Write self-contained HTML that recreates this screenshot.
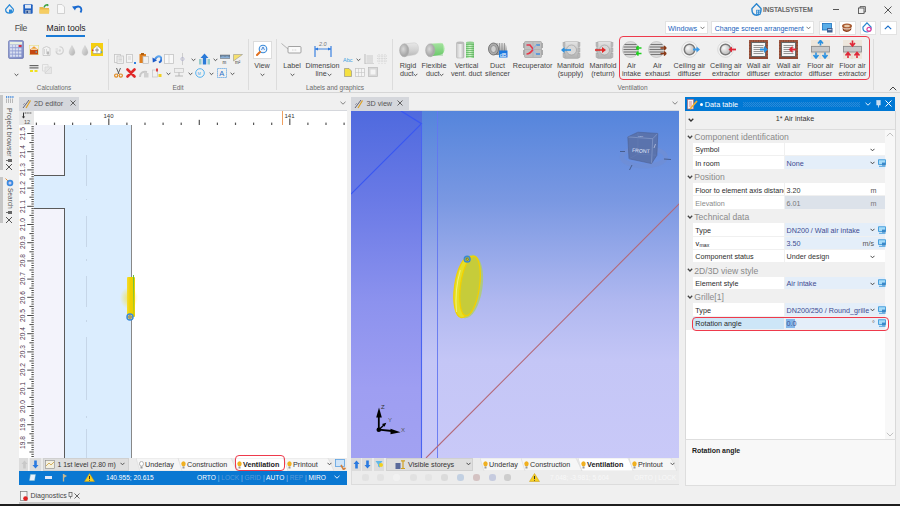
<!DOCTYPE html>
<html><head><meta charset="utf-8">
<style>
*{box-sizing:border-box;margin:0;padding:0}
html,body{width:900px;height:506px;overflow:hidden;background:#f0f0f0;font-family:"Liberation Sans",sans-serif;color:#333;position:relative}
.a{position:absolute;display:block}
.t{position:absolute;white-space:nowrap;line-height:1}
</style></head><body>
<svg class="a" style="left:5px;top:4px;" width="9" height="10" viewBox="0 0 9 10"><path d="M4.5 0.8 L8.3 5.2 Q8.6 8.8 4.5 9.2 Q0.4 8.8 0.7 5.2 Z" fill="none" stroke="#2a8ad8" stroke-width="1.3"/><rect x="4" y="5.5" width="3" height="3.5" fill="#2a8ad8"/></svg>
<svg class="a" style="left:23px;top:4px;" width="10" height="10" viewBox="0 0 10 10"><rect x="0.3" y="0.3" width="9.4" height="9.4" rx="1" fill="#1f5fc0"/><rect x="2" y="0.8" width="6" height="3.6" fill="#dfe8f5"/><rect x="2.3" y="6" width="5.4" height="3.7" fill="#9cb0cc"/><rect x="3.5" y="6.8" width="1.4" height="2.2" fill="#1f3f80"/></svg>
<svg class="a" style="left:39px;top:4px;" width="11" height="10" viewBox="0 0 11 10"><path d="M0.5 3 L4 3 L5 4 L10 4 L10 9.5 L0.5 9.5 Z" fill="#e8b84a"/><path d="M0.5 5.5 L10.5 5.5 L10 9.5 L0.5 9.5 Z" fill="#f6cd62"/><path d="M5 3.5 Q6 0.5 9 0.8" stroke="#3aa040" stroke-width="1.3" fill="none"/><path d="M8 0 L10 1 L8.3 2.5 Z" fill="#3aa040"/></svg>
<svg class="a" style="left:57px;top:4px;" width="8" height="10" viewBox="0 0 8 10"><path d="M0.5 0.5 L5 0.5 L7.5 3 L7.5 9.5 L0.5 9.5 Z" fill="#f8f8f8" stroke="#c8c8c8" stroke-width="0.8"/></svg>
<svg class="a" style="left:72px;top:5px;" width="11" height="8" viewBox="0 0 11 8"><path d="M2.5 3.5 Q5 0.5 8 2 Q10.5 4 8.5 7.5" stroke="#1a6ad0" stroke-width="1.8" fill="none"/><path d="M0 1.5 L4.5 1 L3 5.5 Z" fill="#1a6ad0"/></svg>
<div class="t" style="left:14.8px;top:23.58px;font-size:8.6px;color:#4a4a4a;letter-spacing:-0.45px">File</div>
<div class="t" style="left:46.5px;top:23.58px;font-size:8.6px;color:#222;">Main tools</div>
<div class="a" style="left:46px;top:34.5px;width:39px;height:2px;background:#1a7ad6"></div>
<svg class="a" style="left:751px;top:3px;" width="11" height="13" viewBox="0 0 11 13"><path d="M5.5 0.8 L10 5.5 Q10.5 11.8 5.5 12.2 Q0.5 11.8 1 5.5 Z" fill="none" stroke="#2a86cf" stroke-width="1.4"/><rect x="5.2" y="6.8" width="4.2" height="5" fill="#2a86cf"/><rect x="6" y="7.6" width="1" height="1" fill="#fff"/><rect x="7.8" y="7.6" width="1" height="1" fill="#fff"/><rect x="6" y="9.6" width="1" height="1" fill="#fff"/><rect x="7.8" y="9.6" width="1" height="1" fill="#fff"/></svg>
<div class="t" style="left:763px;top:6.86px;font-size:6.5px;color:#505050;letter-spacing:0.05px;-webkit-text-stroke:0.2px #505050">INSTALSYSTEM</div>
<div class="a" style="left:833px;top:9px;width:6px;height:1px;background:#555"></div>
<svg class="a" style="left:858px;top:6px;" width="8" height="8" viewBox="0 0 8 8"><rect x="0.5" y="2" width="5.5" height="5.5" fill="none" stroke="#555" stroke-width="0.9"/><path d="M2 2 V0.6 H7.4 V6 H6" fill="none" stroke="#555" stroke-width="0.9"/></svg>
<svg class="a" style="left:884px;top:6px;" width="8" height="8" viewBox="0 0 8 8"><path d="M0.5 0.5 L7.5 7.5 M7.5 0.5 L0.5 7.5" stroke="#555" stroke-width="1"/></svg>
<div class="a" style="left:665px;top:21px;width:43px;height:13px;background:#fff;border:1px solid #e2e2e2"></div>
<div class="t" style="left:668px;top:24.56px;font-size:7.2px;color:#1862bc;">Windows</div>
<svg class="a" style="left:700px;top:26px;" width="5" height="4" viewBox="0 0 5 4"><path d="M0.5 0.8 L2.5 2.8 L4.5 0.8" stroke="#666" stroke-width="0.9" fill="none"/></svg>
<div class="a" style="left:711px;top:21px;width:103px;height:13px;background:#fff;border:1px solid #e2e2e2"></div>
<div class="t" style="left:714.7px;top:24.59px;font-size:7.0px;color:#1862bc;">Change screen arrangement</div>
<svg class="a" style="left:806px;top:26px;" width="5" height="4" viewBox="0 0 5 4"><path d="M0.5 0.8 L2.5 2.8 L4.5 0.8" stroke="#666" stroke-width="0.9" fill="none"/></svg>
<div class="a" style="left:819px;top:21px;width:16.5px;height:13.5px;background:#fff;border:1px solid #e2e2e2"></div>
<div class="a" style="left:839px;top:21px;width:16.5px;height:13.5px;background:#fff;border:1px solid #e2e2e2"></div>
<div class="a" style="left:859.5px;top:21px;width:16.5px;height:13.5px;background:#fff;border:1px solid #e2e2e2"></div>
<div class="a" style="left:880px;top:21px;width:16.5px;height:13.5px;background:#fff;border:1px solid #e2e2e2"></div>
<svg class="a" style="left:822px;top:23px;" width="11" height="10" viewBox="0 0 11 10"><rect x="0.5" y="0.5" width="9" height="6.5" fill="#5aaee8" stroke="#1a70c0" stroke-width="0.8"/><rect x="5" y="5" width="5.5" height="4.5" fill="#3f5f90"/><rect x="6" y="6" width="3.5" height="1.2" fill="#b8c8e0"/></svg>
<svg class="a" style="left:841px;top:23px;" width="12" height="10" viewBox="0 0 12 10"><ellipse cx="6" cy="3" rx="5" ry="2.6" fill="#a85a30"/><ellipse cx="6" cy="3" rx="3" ry="1.2" fill="#e8c8a8"/><path d="M1.5 5 Q6 8 10.5 5 L10 7 Q6 10.5 2 7.5 Z" fill="#8a3a18"/><path d="M3 6.5 Q6 8 9 6.5" stroke="#e0b890" stroke-width="0.6" fill="none"/></svg>
<svg class="a" style="left:862px;top:22px;" width="11" height="11" viewBox="0 0 11 11"><path d="M5 0.8 L9 5 Q9.5 9.8 5 10 Q0.5 9.8 1 5 Z" fill="none" stroke="#2a86cf" stroke-width="1.2"/><circle cx="7" cy="7.3" r="2.6" fill="#e040a0"/><circle cx="7" cy="7.3" r="1.3" fill="#fff"/></svg>
<svg class="a" style="left:884px;top:25px;" width="8" height="5" viewBox="0 0 8 5"><path d="M0.8 4.2 L4 1 L7.2 4.2" stroke="#1a6ec8" stroke-width="1.1" fill="none"/></svg>
<svg class="a" style="left:8px;top:40px;" width="16" height="19" viewBox="0 0 16 19"><defs><linearGradient id="calc" x1="0" y1="0" x2="1" y2="1"><stop offset="0" stop-color="#a8b4e0"/><stop offset="1" stop-color="#7a88c4"/></linearGradient></defs><rect x="0.5" y="0.5" width="15" height="18" rx="1.5" fill="url(#calc)" stroke="#5a68a8" stroke-width="0.6"/><rect x="2" y="2" width="12" height="2.5" fill="#e8f0e0"/><rect x="10.5" y="5" width="3" height="2" fill="#d83040"/><rect x="2" y="5.0" width="2.4" height="2.2" fill="#d8def0"/><rect x="5" y="5.0" width="2.4" height="2.2" fill="#d8def0"/><rect x="8" y="5.0" width="2.4" height="2.2" fill="#d8def0"/><rect x="2" y="8.2" width="2.4" height="2.2" fill="#d8def0"/><rect x="5" y="8.2" width="2.4" height="2.2" fill="#d8def0"/><rect x="8" y="8.2" width="2.4" height="2.2" fill="#d8def0"/><rect x="11" y="8.2" width="2.4" height="2.2" fill="#d8def0"/><rect x="2" y="11.4" width="2.4" height="2.2" fill="#d8def0"/><rect x="5" y="11.4" width="2.4" height="2.2" fill="#d8def0"/><rect x="8" y="11.4" width="2.4" height="2.2" fill="#d8def0"/><rect x="11" y="11.4" width="2.4" height="2.2" fill="#d8def0"/><rect x="2" y="14.600000000000001" width="2.4" height="2.2" fill="#d8def0"/><rect x="5" y="14.600000000000001" width="2.4" height="2.2" fill="#d8def0"/><rect x="8" y="14.600000000000001" width="2.4" height="2.2" fill="#d8def0"/><rect x="11" y="14.600000000000001" width="2.4" height="2.2" fill="#d8def0"/></svg>
<svg class="a" style="left:14px;top:73px;" width="5" height="4" viewBox="0 0 5 4"><path d="M0.6 0.8 L2.5 2.7 L4.4 0.8" stroke="#444" stroke-width="0.9" fill="none"/></svg>
<svg class="a" style="left:29px;top:45px;" width="10" height="10" viewBox="0 0 10 10"><rect x="0.3" y="0.3" width="9.4" height="9.4" fill="none" stroke="#e8e080" stroke-width="0.6"/><path d="M1 4.5 L5 1.2 L9 4.5Z" fill="#f0a030"/><rect x="1" y="4.5" width="8" height="5" fill="#c44812"/><rect x="2" y="3.5" width="6" height="1.5" fill="#f4d0a0"/><rect x="6.5" y="6" width="1.5" height="2" fill="#888"/></svg>
<svg class="a" style="left:42px;top:45px;" width="9" height="11" viewBox="0 0 9 11"><path d="M1 10.5 V3 Q4.5 0 8 3 V10.5Z" fill="#f2f2f2" stroke="#c4c4c4" stroke-width="0.8"/><path d="M2.5 4 V9 M4.5 4 V9" stroke="#ccc" stroke-width="0.7"/><rect x="5" y="6.5" width="2" height="3" fill="#b8b8b8"/></svg>
<svg class="a" style="left:55px;top:46px;" width="9" height="9" viewBox="0 0 9 9"><path d="M4.5 0.8 A3.7 3.7 0 1 1 1 5.5" fill="none" stroke="#cfcfcf" stroke-width="1.1"/><path d="M0.5 3 H3 M0.5 5 H3" stroke="#cfcfcf" stroke-width="0.8"/><circle cx="4.8" cy="4.5" r="1.2" fill="#d8d8d8"/></svg>
<svg class="a" style="left:68px;top:45px;" width="8" height="11" viewBox="0 0 8 11"><defs><linearGradient id="gdrop" x1="0" y1="0" x2="1" y2="1"><stop offset="0" stop-color="#e8e8e8"/><stop offset="1" stop-color="#b0b0b0"/></linearGradient></defs><path d="M4 0.5 Q7.5 6 7 8 Q6 10.5 4 10.5 Q2 10.5 1 8 Q0.5 6 4 0.5Z" fill="url(#gdrop)" stroke="#c8c8c8" stroke-width="0.4"/></svg>
<svg class="a" style="left:81px;top:45px;" width="8" height="11" viewBox="0 0 8 11"><defs><linearGradient id="gdrop" x1="0" y1="0" x2="1" y2="1"><stop offset="0" stop-color="#e8e8e8"/><stop offset="1" stop-color="#b0b0b0"/></linearGradient></defs><path d="M4 0.5 Q7.5 6 7 8 Q6 10.5 4 10.5 Q2 10.5 1 8 Q0.5 6 4 0.5Z" fill="url(#gdrop)" stroke="#c8c8c8" stroke-width="0.4"/></svg>
<svg class="a" style="left:91px;top:43px;" width="12" height="13" viewBox="0 0 12 13"><rect x="0" y="0" width="12" height="13" fill="#f5cf10"/><path d="M2 6 L6 2.5 L10 6 V10.5 H2 Z" fill="#fff" stroke="#888" stroke-width="0.5"/><path d="M6 4.5 V9.5 M4 7 H8" stroke="#777" stroke-width="0.8"/><rect x="1" y="6.5" width="1.5" height="1.5" fill="#e03030"/><rect x="9.5" y="8.5" width="1.8" height="1.2" fill="#30a0e0"/></svg>
<svg class="a" style="left:29px;top:64px;" width="10" height="9" viewBox="0 0 10 9"><rect x="0.5" y="1" width="9" height="1.2" fill="#666"/><rect x="0.5" y="3.3" width="9" height="1.2" fill="#666"/><rect x="1" y="6" width="3" height="2" fill="#f0e020"/><rect x="5.5" y="6" width="3" height="2" fill="#f0e020"/></svg>
<svg class="a" style="left:42px;top:64px;" width="10" height="10" viewBox="0 0 10 10"><path d="M0.5 0.5 H6 V7 H0.5Z" fill="none" stroke="#d8d8d8" stroke-width="0.9"/><path d="M3 3 L9.5 3 L9.5 9.5 L3 9.5Z" fill="#e6e6e6" stroke="#d4d4d4" stroke-width="0.7"/><path d="M3 9 L9 3" stroke="#d0d0d0" stroke-width="0.7"/></svg>
<div class="t" style="left:-46px;width:200px;text-align:center;top:84.88px;font-size:6.3px;color:#6a6a6a;">Calculations</div>
<div class="a" style="left:108px;top:39px;width:1px;height:51px;background:#dcdcdc"></div>
<svg class="a" style="left:114px;top:54px;" width="10" height="10" viewBox="0 0 10 10"><rect x="0.5" y="0.5" width="6" height="8" fill="#f4f4f4" stroke="#c4c4c4" stroke-width="0.8"/><rect x="3" y="2" width="6.5" height="7.5" fill="#eee" stroke="#c4c4c4" stroke-width="0.8"/><path d="M4.5 4 H8 M4.5 5.5 H8 M4.5 7 H8" stroke="#c4c4c4" stroke-width="0.6"/></svg>
<svg class="a" style="left:126px;top:54px;" width="10" height="10" viewBox="0 0 10 10"><rect x="0.5" y="0.5" width="6" height="8" fill="#f4f4f4" stroke="#c4c4c4" stroke-width="0.8"/><path d="M2 3 H5 M2 5 H5" stroke="#c4c4c4" stroke-width="0.7"/><rect x="8" y="8" width="2" height="2" fill="#3080e0"/></svg>
<svg class="a" style="left:139px;top:53px;" width="10" height="11" viewBox="0 0 10 11"><rect x="0.5" y="1" width="6.5" height="9" fill="#e08020"/><rect x="2" y="0" width="3" height="2" fill="#b06010"/><rect x="4" y="3.5" width="5.5" height="7" fill="#f0f0f0" stroke="#bbb" stroke-width="0.7"/></svg>
<svg class="a" style="left:152px;top:54px;" width="10" height="10" viewBox="0 0 10 10"><defs><linearGradient id="gundo" x1="0" y1="0" x2="0" y2="1"><stop offset="0" stop-color="#60a8f0"/><stop offset="1" stop-color="#1a5ac8"/></linearGradient></defs><path d="M3 5.5 Q5 1.5 8 2.5 Q10.5 4 8.5 7.5 L7 8.5" stroke="url(#gundo)" stroke-width="2" fill="none"/><path d="M0.5 3.5 L5 6.5 L0.8 8.5 Z" fill="#1a5ac8"/></svg>
<svg class="a" style="left:164px;top:54px;" width="10" height="10" viewBox="0 0 10 10"><rect x="0.5" y="0.5" width="9" height="9" fill="#f8f8f8" stroke="#c4c4c4" stroke-width="0.8"/><path d="M5 1 V9" stroke="#c4c4c4" stroke-width="0.6"/></svg>
<svg class="a" style="left:180px;top:53px;" width="5" height="12" viewBox="0 0 5 12"><path d="M2.5 0 V12" stroke="#c4c4c4" stroke-width="0.8"/><circle cx="2.5" cy="6" r="1.6" fill="none" stroke="#aac" stroke-width="0.7"/></svg>
<svg class="a" style="left:191px;top:58px;" width="5" height="4" viewBox="0 0 5 4"><path d="M0.6 0.8 L2.5 2.7 L4.4 0.8" stroke="#444" stroke-width="0.9" fill="none"/></svg>
<svg class="a" style="left:199px;top:53px;" width="11" height="12" viewBox="0 0 11 12"><path d="M5.5 0.5 L9.5 5 H7.2 V11.5 H3.8 V5 H1.5 Z" fill="#2a7ad8"/><rect x="0" y="6" width="2.5" height="5.5" fill="#9cc"/><rect x="8.5" y="6" width="2.5" height="5.5" fill="#9cc"/></svg>
<svg class="a" style="left:213px;top:58px;" width="5" height="4" viewBox="0 0 5 4"><path d="M0.6 0.8 L2.5 2.7 L4.4 0.8" stroke="#444" stroke-width="0.9" fill="none"/></svg>
<svg class="a" style="left:220px;top:54px;" width="10" height="10" viewBox="0 0 10 10"><rect x="0" y="1" width="10" height="3.5" fill="#8ab0d8" stroke="#666" stroke-width="0.5"/><path d="M1 1 V3 M3 1 V2.5 M5 1 V3 M7 1 V2.5 M9 1 V3" stroke="#333" stroke-width="0.5"/><text x="2.5" y="9.5" font-size="4.5" fill="#333" font-family="Liberation Sans">m</text></svg>
<svg class="a" style="left:233px;top:54px;" width="10" height="10" viewBox="0 0 10 10"><path d="M0.5 0.5 L9.5 0.5 L0.5 7 Z" fill="#f5e070" stroke="#888" stroke-width="0.5"/><text x="2" y="9.5" font-size="4.5" fill="#333" font-family="Liberation Sans">m²</text></svg>
<svg class="a" style="left:114px;top:68px;" width="9" height="10" viewBox="0 0 9 10"><path d="M2.5 0 L5 6 M6.5 0 L4 6" stroke="#555" stroke-width="0.9"/><circle cx="2.2" cy="7.6" r="1.6" fill="none" stroke="#e08a20" stroke-width="1.2"/><circle cx="6.8" cy="7.6" r="1.6" fill="none" stroke="#e08a20" stroke-width="1.2"/></svg>
<svg class="a" style="left:126px;top:68px;" width="10" height="10" viewBox="0 0 10 10"><path d="M1.5 1.5 L8.5 8.5 M8.5 1.5 L1.5 8.5" stroke="#e02828" stroke-width="2.6" stroke-linecap="round"/></svg>
<svg class="a" style="left:139px;top:69px;" width="10" height="9" viewBox="0 0 10 9"><path d="M1 8 Q1 2 8 3" stroke="#c8c8c8" stroke-width="2" fill="none"/><rect x="5" y="4" width="4.5" height="4.5" fill="#d0d0d0"/></svg>
<svg class="a" style="left:152px;top:68px;" width="10" height="10" viewBox="0 0 10 10"><rect x="0.5" y="2" width="5" height="7" fill="#f0f0f0" stroke="#c4c4c4" stroke-width="0.7"/><rect x="4" y="0.5" width="2" height="3" fill="#e04040"/><rect x="6.5" y="6" width="3" height="3" fill="#f0d020"/></svg>
<svg class="a" style="left:166px;top:72px;" width="5" height="4" viewBox="0 0 5 4"><path d="M0.6 0.8 L2.5 2.7 L4.4 0.8" stroke="#444" stroke-width="0.9" fill="none"/></svg>
<svg class="a" style="left:174px;top:68px;" width="10" height="10" viewBox="0 0 10 10"><rect x="0.5" y="0.5" width="9" height="4" fill="#eee" stroke="#c4c4c4" stroke-width="0.7"/><path d="M5 4.5 V8 M1 8 H9" stroke="#aaa" stroke-width="0.8"/></svg>
<svg class="a" style="left:188px;top:72px;" width="5" height="4" viewBox="0 0 5 4"><path d="M0.6 0.8 L2.5 2.7 L4.4 0.8" stroke="#444" stroke-width="0.9" fill="none"/></svg>
<svg class="a" style="left:195px;top:68px;" width="10" height="10" viewBox="0 0 10 10"><circle cx="5" cy="5" r="4.3" fill="none" stroke="#44aaee" stroke-width="0.9"/><text x="2.6" y="6.6" font-size="4" fill="#44aaee" font-family="Liberation Sans">M</text></svg>
<svg class="a" style="left:209px;top:72px;" width="5" height="4" viewBox="0 0 5 4"><path d="M0.6 0.8 L2.5 2.7 L4.4 0.8" stroke="#444" stroke-width="0.9" fill="none"/></svg>
<svg class="a" style="left:217px;top:68px;" width="10" height="10" viewBox="0 0 10 10"><rect x="0.5" y="0.5" width="9" height="9" fill="none" stroke="#3a90e0" stroke-width="0.8" stroke-dasharray="1.2 0.8"/><text x="2.2" y="8.2" font-size="7.5" fill="#2a70c8" font-family="Liberation Sans">A</text></svg>
<svg class="a" style="left:230px;top:72px;" width="5" height="4" viewBox="0 0 5 4"><path d="M0.6 0.8 L2.5 2.7 L4.4 0.8" stroke="#444" stroke-width="0.9" fill="none"/></svg>
<div class="t" style="left:78px;width:200px;text-align:center;top:84.86px;font-size:6.5px;color:#6a6a6a;">Edit</div>
<div class="a" style="left:248px;top:39px;width:1px;height:51px;background:#dcdcdc"></div>
<div class="a" style="left:253px;top:41px;width:18.5px;height:17.5px;background:#fff;border:1px solid #dcdcdc"></div>
<svg class="a" style="left:256px;top:44px;" width="12" height="12" viewBox="0 0 12 12"><circle cx="7" cy="5" r="3.8" fill="#eaf4ff" stroke="#3a8ad8" stroke-width="1.1"/><path d="M5.5 6 L7 3 L8.5 6" stroke="#2a70c8" stroke-width="0.8" fill="none"/><path d="M4 8 L1 11" stroke="#e07020" stroke-width="2" stroke-linecap="round"/></svg>
<div class="t" style="left:162px;width:200px;text-align:center;top:61.76px;font-size:7.2px;color:#444;">View</div>
<svg class="a" style="left:259.5px;top:73px;" width="5" height="4" viewBox="0 0 5 4"><path d="M0.6 0.8 L2.5 2.7 L4.4 0.8" stroke="#444" stroke-width="0.9" fill="none"/></svg>
<div class="a" style="left:275.5px;top:39px;width:1px;height:51px;background:#dcdcdc"></div>
<svg class="a" style="left:281px;top:43px;" width="21" height="11" viewBox="0 0 21 11"><path d="M0.5 0.5 L7 6" stroke="#999" stroke-width="0.7"/><rect x="7" y="3.5" width="13" height="6.5" rx="1" fill="#fafafa" stroke="#999" stroke-width="0.9"/><path d="M11 7 H16" stroke="#aaa" stroke-width="0.6" stroke-dasharray="0.8 0.8"/></svg>
<div class="t" style="left:192px;width:200px;text-align:center;top:62.06px;font-size:7.2px;color:#444;">Label</div>
<svg class="a" style="left:290px;top:73px;" width="5" height="4" viewBox="0 0 5 4"><path d="M0.6 0.8 L2.5 2.7 L4.4 0.8" stroke="#444" stroke-width="0.9" fill="none"/></svg>
<svg class="a" style="left:313px;top:40px;" width="20" height="18" viewBox="0 0 20 18"><text x="6" y="5.5" font-size="5.5" font-style="italic" fill="#777" font-family="Liberation Sans">2.0</text><path d="M2 6 V17 M18 6 V17" stroke="#2a78e0" stroke-width="1.1"/><path d="M2 9 H18" stroke="#2a78e0" stroke-width="0.9"/><path d="M2 9 L5 7.5 V10.5Z M18 9 L15 7.5 V10.5Z" fill="#2a78e0"/></svg>
<div class="t" style="left:222.5px;width:200px;text-align:center;top:62.06px;font-size:7.2px;color:#444;">Dimension</div>
<div class="t" style="left:315.5px;top:70.06px;font-size:7.2px;color:#444;">line</div>
<svg class="a" style="left:326.5px;top:73px;" width="5" height="4" viewBox="0 0 5 4"><path d="M0.6 0.8 L2.5 2.7 L4.4 0.8" stroke="#444" stroke-width="0.9" fill="none"/></svg>
<svg class="a" style="left:343px;top:56px;" width="11" height="6" viewBox="0 0 11 6"><text x="0" y="5.5" font-size="5.5" fill="#3aa0e0" font-family="Liberation Sans">Abc</text></svg>
<svg class="a" style="left:356px;top:58px;" width="5" height="4" viewBox="0 0 5 4"><path d="M0.6 0.8 L2.5 2.7 L4.4 0.8" stroke="#444" stroke-width="0.9" fill="none"/></svg>
<svg class="a" style="left:364px;top:54px;" width="10" height="10" viewBox="0 0 10 10"><path d="M1 0 V10 H10" stroke="#bbb" stroke-width="1" fill="none"/><path d="M2.5 2 H9 M2.5 4 H9 M2.5 6 H9 M2.5 8 H9" stroke="#c4c4c4" stroke-width="0.9"/></svg>
<svg class="a" style="left:377px;top:54px;" width="10" height="10" viewBox="0 0 10 10"><path d="M0 2 H10 M0 4.5 H10 M0 7 H10 M2 0 V10 M5 0 V10 M8 0 V10" stroke="#cfcfcf" stroke-width="0.8" stroke-dasharray="1 0.8"/></svg>
<svg class="a" style="left:344px;top:68px;" width="8" height="9" viewBox="0 0 8 9"><path d="M0.5 0.5 H5 L7.5 3 V8.5 H0.5Z" fill="#f4e040" stroke="#888" stroke-width="0.6"/></svg>
<svg class="a" style="left:355px;top:68px;" width="10" height="9" viewBox="0 0 10 9"><rect x="0.5" y="0.5" width="9" height="8" fill="#f4f4f4" stroke="#c4c4c4" stroke-width="0.7"/><path d="M3.5 0.5 V8.5 M6.5 0.5 V8.5 M0.5 4.5 H9.5" stroke="#c4c4c4" stroke-width="0.6"/></svg>
<svg class="a" style="left:368px;top:67px;" width="10" height="10" viewBox="0 0 10 10"><rect x="0.5" y="0.5" width="9" height="9" fill="#d8d8d8" stroke="#bbb" stroke-width="0.7"/><rect x="2.5" y="2.5" width="5" height="5" fill="#f4f4f4"/></svg>
<div class="t" style="left:235px;width:200px;text-align:center;top:84.86px;font-size:6.5px;color:#6a6a6a;">Labels and graphics</div>
<div class="a" style="left:392px;top:39px;width:1px;height:51px;background:#dcdcdc"></div>
<svg class="a" style="left:399px;top:42px;" width="20" height="16" viewBox="0 0 20 16"><defs><linearGradient id="gcyl" x1="0" y1="0" x2="0" y2="1"><stop offset="0" stop-color="#e8e8e8"/><stop offset="0.5" stop-color="#d4d4d4"/><stop offset="1" stop-color="#b8b8b8"/></linearGradient><radialGradient id="gend" cx="0.4" cy="0.4"><stop offset="0" stop-color="#d8d8d8"/><stop offset="1" stop-color="#a8a8a8"/></radialGradient></defs><path d="M5 2 L15.5 0.8 Q19.5 1.5 19.5 6.5 Q19.5 12 15.5 12.8 L5 14.5 Z" fill="url(#gcyl)" stroke="#c8c8c8" stroke-width="0.5"/><ellipse cx="5.2" cy="8.3" rx="4.6" ry="6.5" fill="url(#gend)" stroke="#aaa" stroke-width="0.5"/></svg>
<svg class="a" style="left:425px;top:42px;" width="20" height="16" viewBox="0 0 20 16"><defs><linearGradient id="ggrn" x1="0" y1="0" x2="0" y2="1"><stop offset="0" stop-color="#c8f4c0"/><stop offset="1" stop-color="#70d070"/></linearGradient></defs><path d="M5 2 L15.5 0.8 Q19.5 1.5 19.5 6.5 Q19.5 12 15.5 12.8 L5 14.5 Z" fill="url(#ggrn)"/><path d="M7 1.5 V14" stroke="#58b858" stroke-width="0.6"/><path d="M9 1.5 V14" stroke="#58b858" stroke-width="0.6"/><path d="M11 1.5 V14" stroke="#58b858" stroke-width="0.6"/><path d="M13 1.5 V14" stroke="#58b858" stroke-width="0.6"/><path d="M15 1.5 V14" stroke="#58b858" stroke-width="0.6"/><path d="M17 1.5 V14" stroke="#58b858" stroke-width="0.6"/><ellipse cx="5.2" cy="8.3" rx="4.6" ry="6.5" fill="url(#gend)" stroke="#aaa" stroke-width="0.5"/></svg>
<svg class="a" style="left:456px;top:41px;" width="20" height="18" viewBox="0 0 20 18"><defs><linearGradient id="gv" x1="0" y1="0" x2="1" y2="0"><stop offset="0" stop-color="#c8c8c8"/><stop offset="0.5" stop-color="#f0f0f0"/><stop offset="1" stop-color="#b8b8b8"/></linearGradient><linearGradient id="gvg" x1="0" y1="0" x2="1" y2="0"><stop offset="0" stop-color="#90d890"/><stop offset="0.5" stop-color="#d8f8d0"/><stop offset="1" stop-color="#80c880"/></linearGradient></defs><rect x="0.5" y="1.5" width="7.5" height="15.5" rx="1" fill="url(#gv)" stroke="#aaa" stroke-width="0.5"/><ellipse cx="4.25" cy="1.8" rx="3.75" ry="1.3" fill="#bbb"/><rect x="10" y="1.5" width="8" height="15.5" fill="url(#gvg)"/><path d="M10 3.5 H18" stroke="#58b058" stroke-width="0.7"/><path d="M10 5.5 H18" stroke="#58b058" stroke-width="0.7"/><path d="M10 7.5 H18" stroke="#58b058" stroke-width="0.7"/><path d="M10 9.5 H18" stroke="#58b058" stroke-width="0.7"/><path d="M10 11.5 H18" stroke="#58b058" stroke-width="0.7"/><path d="M10 13.5 H18" stroke="#58b058" stroke-width="0.7"/><path d="M10 15.5 H18" stroke="#58b058" stroke-width="0.7"/><ellipse cx="14" cy="1.8" rx="4" ry="1.3" fill="#90d090"/></svg>
<svg class="a" style="left:488px;top:42px;" width="20" height="16" viewBox="0 0 20 16"><defs><linearGradient id="gs" x1="0" y1="0" x2="0" y2="1"><stop offset="0" stop-color="#e0e0e0"/><stop offset="1" stop-color="#909090"/></linearGradient></defs><path d="M5 1 L15 1 Q19 2 19 7 Q19 12 15 13 L5 13 Z" fill="url(#gs)"/><path d="M9.0 1 V13" stroke="#777" stroke-width="0.6"/><path d="M11.5 1 V13" stroke="#777" stroke-width="0.6"/><path d="M14.0 1 V13" stroke="#777" stroke-width="0.6"/><path d="M16.5 1 V13" stroke="#777" stroke-width="0.6"/><ellipse cx="5.5" cy="7" rx="5" ry="6" fill="#aaa" stroke="#666" stroke-width="0.8"/><ellipse cx="5.5" cy="7" rx="2.8" ry="3.5" fill="#d0d0d0" stroke="#777" stroke-width="0.6"/><rect x="11" y="8.5" width="8.5" height="7" fill="#1a78e0"/><text x="11.8" y="14.5" font-size="5.5" fill="#fff" font-family="Liberation Sans">dB</text></svg>
<svg class="a" style="left:523px;top:41px;" width="20" height="17" viewBox="0 0 20 17"><rect x="1.5" y="0.5" width="17" height="16" rx="1" fill="#c0c0c0" stroke="#999" stroke-width="0.6"/><rect x="0" y="2" width="2" height="5" fill="#aaa"/><rect x="0" y="9" width="2" height="5" fill="#aaa"/><rect x="18" y="2" width="2" height="5" fill="#aaa"/><rect x="18" y="9" width="2" height="5" fill="#aaa"/><path d="M10 1 V16 M2 8.5 H18" stroke="#a8a8a8" stroke-width="0.6"/><path d="M3.5 4 H6 Q8 4 10 8.5 Q12 13 14 13 H16.5" stroke="#a0b8e8" stroke-width="1.1" fill="none"/><path d="M3.5 13 Q7 13 10 8.5" stroke="#e83848" stroke-width="1.6" fill="none"/><path d="M3.5 4 H7 L10 8" stroke="#e83848" stroke-width="1.6" fill="none"/><path d="M13 4 H17 M13 13 H17" stroke="#4a90d8" stroke-width="1.4"/><path d="M10 8.5 Q12 4 14 4" stroke="#8ab0e0" stroke-width="1" fill="none"/></svg>
<svg class="a" style="left:561px;top:41px;" width="20" height="18" viewBox="0 0 20 18"><defs><linearGradient id="gm561" x1="0" y1="0" x2="0" y2="1"><stop offset="0" stop-color="#e4e4e4"/><stop offset="1" stop-color="#b0b0b0"/></linearGradient></defs><rect x="3" y="0.5" width="15" height="17" rx="1.5" fill="url(#gm561)" stroke="#aaa" stroke-width="0.5"/><rect x="2" y="1.5" width="2" height="4" fill="#bdbdbd" stroke="#999" stroke-width="0.4"/><rect x="2" y="7" width="2" height="4" fill="#bdbdbd" stroke="#999" stroke-width="0.4"/><rect x="2" y="12.5" width="2" height="4" fill="#bdbdbd" stroke="#999" stroke-width="0.4"/><rect x="17" y="1.5" width="2" height="4" fill="#bdbdbd" stroke="#999" stroke-width="0.4"/><rect x="17" y="7" width="2" height="4" fill="#bdbdbd" stroke="#999" stroke-width="0.4"/><rect x="17" y="12.5" width="2" height="4" fill="#bdbdbd" stroke="#999" stroke-width="0.4"/><circle cx="10.5" cy="9" r="5" fill="#d8d8d8" stroke="#999" stroke-width="0.6"/><path d="M1 9 H10" stroke="#2a90e0" stroke-width="1.6"/><path d="M0 9 L3.5 6 V12Z" fill="#2a90e0"/></svg>
<svg class="a" style="left:594px;top:41px;" width="20" height="18" viewBox="0 0 20 18"><defs><linearGradient id="gm594" x1="0" y1="0" x2="0" y2="1"><stop offset="0" stop-color="#e4e4e4"/><stop offset="1" stop-color="#b0b0b0"/></linearGradient></defs><rect x="3" y="0.5" width="15" height="17" rx="1.5" fill="url(#gm594)" stroke="#aaa" stroke-width="0.5"/><rect x="2" y="1.5" width="2" height="4" fill="#bdbdbd" stroke="#999" stroke-width="0.4"/><rect x="2" y="7" width="2" height="4" fill="#bdbdbd" stroke="#999" stroke-width="0.4"/><rect x="2" y="12.5" width="2" height="4" fill="#bdbdbd" stroke="#999" stroke-width="0.4"/><rect x="17" y="1.5" width="2" height="4" fill="#bdbdbd" stroke="#999" stroke-width="0.4"/><rect x="17" y="7" width="2" height="4" fill="#bdbdbd" stroke="#999" stroke-width="0.4"/><rect x="17" y="12.5" width="2" height="4" fill="#bdbdbd" stroke="#999" stroke-width="0.4"/><circle cx="10.5" cy="9" r="5" fill="#d8d8d8" stroke="#999" stroke-width="0.6"/><path d="M1 9 H10" stroke="#e02828" stroke-width="1.6"/><path d="M12 9 L8 6 V12Z" fill="#e02828"/></svg>
<div class="a" style="left:619.2px;top:35.6px;width:250.6px;height:44px;border:1.7px solid #ee3a4c;border-radius:4px"></div>
<svg class="a" style="left:622px;top:41px;" width="20" height="17" viewBox="0 0 20 17"><circle cx="8.5" cy="8.5" r="8" fill="#dcdcdc" stroke="#bbb" stroke-width="0.6"/><path d="M2.5 3.5 H14.5" stroke="#777" stroke-width="1.1"/><path d="M1.5 6.0 H15.5" stroke="#777" stroke-width="1.1"/><path d="M1.5 8.5 H15.5" stroke="#777" stroke-width="1.1"/><path d="M1.5 11.0 H15.5" stroke="#777" stroke-width="1.1"/><path d="M2.5 13.5 H14.5" stroke="#777" stroke-width="1.1"/><path d="M19.5 7 H14 M14.5 7 L16.5 5 M14.5 7 L16.5 9 M19.5 12.5 H14 M14.5 12.5 L16.5 10.5 M14.5 12.5 L16.5 14.5" stroke="#20d020" stroke-width="1.6" fill="none"/></svg>
<svg class="a" style="left:648px;top:41px;" width="20" height="17" viewBox="0 0 20 17"><circle cx="8.5" cy="8.5" r="8" fill="#dcdcdc" stroke="#bbb" stroke-width="0.6"/><path d="M2.5 3.5 H14.5" stroke="#777" stroke-width="1.1"/><path d="M1.5 6.0 H15.5" stroke="#777" stroke-width="1.1"/><path d="M1.5 8.5 H15.5" stroke="#777" stroke-width="1.1"/><path d="M1.5 11.0 H15.5" stroke="#777" stroke-width="1.1"/><path d="M2.5 13.5 H14.5" stroke="#777" stroke-width="1.1"/><path d="M12.5 7 H18.5 M18 7 L16 5 M18 7 L16 9 M12.5 12.5 H18.5 M18 12.5 L16 10.5 M18 12.5 L16 14.5" stroke="#8a3a18" stroke-width="1.6" fill="none"/></svg>
<svg class="a" style="left:681px;top:41px;" width="20" height="17" viewBox="0 0 20 17"><circle cx="8.5" cy="8.5" r="7.8" fill="#f6f6f6" stroke="#cdcdcd" stroke-width="0.7"/><defs><radialGradient id="gc" cx="0.35" cy="0.35"><stop offset="0" stop-color="#fafafa"/><stop offset="1" stop-color="#c8c8c8"/></radialGradient></defs><circle cx="8.5" cy="8.5" r="5.2" fill="url(#gc)" stroke="#7a7a7a" stroke-width="1.5"/><path d="M12 8.5 H16.5" stroke="#3a9ae8" stroke-width="2"/><path d="M19 8.5 L15.5 5.5 V11.5Z" fill="#3a9ae8"/></svg>
<svg class="a" style="left:717px;top:41px;" width="20" height="17" viewBox="0 0 20 17"><circle cx="8.5" cy="8.5" r="7.8" fill="#f6f6f6" stroke="#cdcdcd" stroke-width="0.7"/><defs><radialGradient id="gc" cx="0.35" cy="0.35"><stop offset="0" stop-color="#fafafa"/><stop offset="1" stop-color="#c8c8c8"/></radialGradient></defs><circle cx="8.5" cy="8.5" r="5.2" fill="url(#gc)" stroke="#7a7a7a" stroke-width="1.5"/><path d="M13 8.5 H19" stroke="#e02838" stroke-width="1.8"/><path d="M11.5 8.5 L15 5.5 V11.5Z" fill="#e02838"/></svg>
<svg class="a" style="left:749px;top:40px;" width="19" height="19" viewBox="0 0 19 19"><rect x="0" y="0" width="19" height="19" fill="#8e4632"/><path d="M0 1 H19 M0 4 H19 M0 7 H19 M0 10 H19 M0 13 H19 M0 16 H19" stroke="#c89878" stroke-width="0.5" stroke-dasharray="1.5 1"/><rect x="2.5" y="2.5" width="14" height="14" fill="#f4f4f4" stroke="#666" stroke-width="1"/><path d="M4.5 5.5 H14.5" stroke="#8a8a8a" stroke-width="0.9"/><path d="M4.5 7.5 H14.5" stroke="#8a8a8a" stroke-width="0.9"/><path d="M4.5 9.5 H14.5" stroke="#8a8a8a" stroke-width="0.9"/><path d="M4.5 11.5 H14.5" stroke="#8a8a8a" stroke-width="0.9"/><path d="M4.5 13.5 H14.5" stroke="#8a8a8a" stroke-width="0.9"/><path d="M11 9.5 H16" stroke="#2a90e0" stroke-width="2"/><path d="M19 9.5 L15 6 V13Z" fill="#2a90e0"/></svg>
<svg class="a" style="left:779px;top:40px;" width="19" height="19" viewBox="0 0 19 19"><rect x="0" y="0" width="19" height="19" fill="#8e4632"/><path d="M0 1 H19 M0 4 H19 M0 7 H19 M0 10 H19 M0 13 H19 M0 16 H19" stroke="#c89878" stroke-width="0.5" stroke-dasharray="1.5 1"/><rect x="2.5" y="2.5" width="14" height="14" fill="#f4f4f4" stroke="#666" stroke-width="1"/><path d="M4.5 5.5 H14.5" stroke="#8a8a8a" stroke-width="0.9"/><path d="M4.5 7.5 H14.5" stroke="#8a8a8a" stroke-width="0.9"/><path d="M4.5 9.5 H14.5" stroke="#8a8a8a" stroke-width="0.9"/><path d="M4.5 11.5 H14.5" stroke="#8a8a8a" stroke-width="0.9"/><path d="M4.5 13.5 H14.5" stroke="#8a8a8a" stroke-width="0.9"/><path d="M11 9.5 H17" stroke="#e02838" stroke-width="2"/><path d="M9.5 9.5 L13.5 6 V13Z" fill="#e02838"/></svg>
<svg class="a" style="left:811px;top:40px;" width="19" height="19" viewBox="0 0 19 19"><rect x="0" y="0" width="19" height="19" fill="#ede6dc"/><path d="M0 6 H19 M0 13 H19 M9 0 V6 M4 6 V13 M14 6 V13 M9 13 V19" stroke="#dcd2c4" stroke-width="0.6"/><rect x="0.5" y="6.5" width="18" height="5.5" fill="#c8c8c8" stroke="#888" stroke-width="0.8"/><path d="M9.5 5.5 V1.5 M7 3.5 L9.5 0.5 L12 3.5 M5 12.5 V17 M2.5 15 L5 18 L7.5 15 M14 12.5 V17 M11.5 15 L14 18 L16.5 15" stroke="#2a90e0" stroke-width="1.6" fill="none"/></svg>
<svg class="a" style="left:843px;top:40px;" width="19" height="19" viewBox="0 0 19 19"><rect x="0" y="0" width="19" height="19" fill="#ede6dc"/><path d="M0 6 H19 M0 13 H19 M9 0 V6 M4 6 V13 M14 6 V13 M9 13 V19" stroke="#dcd2c4" stroke-width="0.6"/><rect x="0.5" y="6.5" width="18" height="5.5" fill="#c8c8c8" stroke="#888" stroke-width="0.8"/><path d="M9.5 0.5 V5 M7 3 L9.5 6 L12 3 M5 18 V13.5 M2.5 15.5 L5 12.5 L7.5 15.5 M14 18 V13.5 M11.5 15.5 L14 12.5 L16.5 15.5" stroke="#e02838" stroke-width="1.6" fill="none"/></svg>
<div class="t" style="left:308px;width:200px;text-align:center;top:62.36px;font-size:7.2px;color:#444;">Rigid</div>
<div class="t" style="left:334px;width:200px;text-align:center;top:62.36px;font-size:7.2px;color:#444;">Flexible</div>
<div class="t" style="left:366.5px;width:200px;text-align:center;top:62.36px;font-size:7.2px;color:#444;">Vertical</div>
<div class="t" style="left:366.5px;width:200px;text-align:center;top:70.06px;font-size:7.2px;color:#444;">vent. duct</div>
<div class="t" style="left:397.5px;width:200px;text-align:center;top:62.36px;font-size:7.2px;color:#444;">Duct</div>
<div class="t" style="left:397.5px;width:200px;text-align:center;top:70.06px;font-size:7.2px;color:#444;">silencer</div>
<div class="t" style="left:432.5px;width:200px;text-align:center;top:62.36px;font-size:7.2px;color:#444;">Recuperator</div>
<div class="t" style="left:470.5px;width:200px;text-align:center;top:62.36px;font-size:7.2px;color:#444;">Manifold</div>
<div class="t" style="left:470.5px;width:200px;text-align:center;top:70.06px;font-size:7.2px;color:#444;">(supply)</div>
<div class="t" style="left:503px;width:200px;text-align:center;top:62.36px;font-size:7.2px;color:#444;">Manifold</div>
<div class="t" style="left:503px;width:200px;text-align:center;top:70.06px;font-size:7.2px;color:#444;">(return)</div>
<div class="t" style="left:531.5px;width:200px;text-align:center;top:62.36px;font-size:7.2px;color:#444;">Air</div>
<div class="t" style="left:531.5px;width:200px;text-align:center;top:70.06px;font-size:7.2px;color:#444;">intake</div>
<div class="t" style="left:557.5px;width:200px;text-align:center;top:62.36px;font-size:7.2px;color:#444;">Air</div>
<div class="t" style="left:557.5px;width:200px;text-align:center;top:70.06px;font-size:7.2px;color:#444;">exhaust</div>
<div class="t" style="left:589.5px;width:200px;text-align:center;top:62.36px;font-size:7.2px;color:#444;">Ceiling air</div>
<div class="t" style="left:589.5px;width:200px;text-align:center;top:70.06px;font-size:7.2px;color:#444;">diffuser</div>
<div class="t" style="left:626px;width:200px;text-align:center;top:62.36px;font-size:7.2px;color:#444;">Ceiling air</div>
<div class="t" style="left:626px;width:200px;text-align:center;top:70.06px;font-size:7.2px;color:#444;">extractor</div>
<div class="t" style="left:658.5px;width:200px;text-align:center;top:62.36px;font-size:7.2px;color:#444;">Wall air</div>
<div class="t" style="left:658.5px;width:200px;text-align:center;top:70.06px;font-size:7.2px;color:#444;">diffuser</div>
<div class="t" style="left:688.5px;width:200px;text-align:center;top:62.36px;font-size:7.2px;color:#444;">Wall air</div>
<div class="t" style="left:688.5px;width:200px;text-align:center;top:70.06px;font-size:7.2px;color:#444;">extractor</div>
<div class="t" style="left:720.5px;width:200px;text-align:center;top:62.36px;font-size:7.2px;color:#444;">Floor air</div>
<div class="t" style="left:720.5px;width:200px;text-align:center;top:70.06px;font-size:7.2px;color:#444;">diffuser</div>
<div class="t" style="left:752.5px;width:200px;text-align:center;top:62.36px;font-size:7.2px;color:#444;">Floor air</div>
<div class="t" style="left:752.5px;width:200px;text-align:center;top:70.06px;font-size:7.2px;color:#444;">extractor</div>
<div class="t" style="left:400px;top:70.06px;font-size:7.2px;color:#444;">duct</div>
<svg class="a" style="left:412.5px;top:73px;" width="5" height="4" viewBox="0 0 5 4"><path d="M0.6 0.8 L2.5 2.7 L4.4 0.8" stroke="#444" stroke-width="0.9" fill="none"/></svg>
<div class="t" style="left:426px;top:70.06px;font-size:7.2px;color:#444;">duct</div>
<svg class="a" style="left:438.5px;top:73px;" width="5" height="4" viewBox="0 0 5 4"><path d="M0.6 0.8 L2.5 2.7 L4.4 0.8" stroke="#444" stroke-width="0.9" fill="none"/></svg>
<div class="t" style="left:532.5px;width:200px;text-align:center;top:84.86px;font-size:6.5px;color:#6a6a6a;">Ventilation</div>
<div class="a" style="left:873px;top:39px;width:1px;height:51px;background:#dcdcdc"></div>
<svg class="a" style="left:889px;top:86px;" width="8" height="5" viewBox="0 0 8 5"><path d="M0.8 4.2 L4 1 L7.2 4.2" stroke="#444" stroke-width="1" fill="none"/></svg>
<div class="a" style="left:0px;top:92px;width:900px;height:1px;background:#d6d6d6"></div>
<div class="a" style="left:0px;top:95px;width:3px;height:75px;background:#c6c6c6"></div>
<div class="a" style="left:0px;top:177px;width:3px;height:46px;background:#c6c6c6"></div>
<svg class="a" style="left:5px;top:96px;" width="9" height="7" viewBox="0 0 9 7"><path d="M1 1 H8.5" stroke="#2a7ad8" stroke-width="1.4" stroke-dasharray="1.2 0.9"/><path d="M1.5 2.5 V7 M3.5 2.5 V7 M5.5 2.5 V7 M7.5 2.5 V7" stroke="#aaa" stroke-width="0.8"/></svg>
<div class="t" style="left:13px;top:108px;font-size:7px;color:#555;transform-origin:0 0;transform:rotate(90deg)">Project browser</div>
<svg class="a" style="left:5px;top:163px;" width="8" height="8" viewBox="0 0 8 8"><path d="M1 1 L7 7 M7 1 L1 7" stroke="#555" stroke-width="1"/></svg>
<svg class="a" style="left:5px;top:178px;" width="9" height="9" viewBox="0 0 9 9"><path d="M0.5 0.5 L3 3" stroke="#e08020" stroke-width="0.9"/><circle cx="5" cy="5" r="3.3" fill="#3a8ae0"/><circle cx="5" cy="5" r="1.5" fill="#cce"/></svg>
<div class="t" style="left:13px;top:188.4px;font-size:6.5px;color:#555;transform-origin:0 0;transform:rotate(90deg)">Search</div>
<svg class="a" style="left:5px;top:157.5px;" width="8" height="5" viewBox="0 0 8 5"><rect x="3" y="1" width="4" height="3" fill="#666"/><path d="M1 2.5 H3" stroke="#555" stroke-width="0.8"/></svg>
<svg class="a" style="left:5px;top:209.5px;" width="8" height="5" viewBox="0 0 8 5"><rect x="3" y="1" width="4" height="3" fill="#666"/><path d="M1 2.5 H3" stroke="#555" stroke-width="0.8"/></svg>
<svg class="a" style="left:5px;top:216px;" width="8" height="8" viewBox="0 0 8 8"><path d="M1 1 L7 7 M7 1 L1 7" stroke="#555" stroke-width="1"/></svg>
<div class="a" style="left:19px;top:96.5px;width:60px;height:14px;background:#d5d7dc"></div>
<div class="a" style="left:19px;top:110px;width:328px;height:1px;background:#d5d7dc"></div>
<svg class="a" style="left:22px;top:99px;" width="9" height="10" viewBox="0 0 9 10"><path d="M1 9 L7 1" stroke="#556" stroke-width="0.9"/><path d="M4 9 L8.5 1.5" stroke="#e0a020" stroke-width="1.2"/><path d="M1 6 L3 4" stroke="#889" stroke-width="0.7"/></svg>
<div class="t" style="left:34px;top:99.96px;font-size:7.2px;color:#555;">2D editor</div>
<svg class="a" style="left:70px;top:100px;" width="6" height="6" viewBox="0 0 6 6"><path d="M0.5 0.5 L5.5 5.5 M5.5 0.5 L0.5 5.5" stroke="#555" stroke-width="0.9"/></svg>
<svg class="a" style="left:340px;top:101px;" width="6" height="4" viewBox="0 0 6 4"><path d="M0.5 0.8 L3 3.2 L5.5 0.8" stroke="#666" stroke-width="0.8" fill="none"/></svg>
<div class="a" style="left:19px;top:111px;width:328px;height:347px;background:#fff;overflow:hidden">
<div class="a" style="left:15px;top:14px;width:30px;height:50px;background:#f3f3fb"></div>
<div class="a" style="left:15px;top:97px;width:30px;height:250px;background:#f3f3fb"></div>
<div class="a" style="left:45.5px;top:14px;width:67px;height:333px;background:#dbedfe"></div>
<div class="a" style="left:15px;top:64px;width:30.5px;height:33px;background:#dbedfe"></div>
<div class="a" style="left:45px;top:14px;width:1.4px;height:50.5px;background:#5a5a5a"></div>
<div class="a" style="left:45px;top:97px;width:1.4px;height:250px;background:#5a5a5a"></div>
<div class="a" style="left:15px;top:63.5px;width:31.4px;height:1.3px;background:#5a5a5a"></div>
<div class="a" style="left:15px;top:96.8px;width:31.4px;height:1.3px;background:#5a5a5a"></div>
<div class="a" style="left:112px;top:14px;width:1.3px;height:333px;background:#888"></div>
<div class="a" style="left:67.1px;top:44.30000000000001px;width:1.3px;height:31.19999999999999px;background:#c6d6e8"></div>
<div class="a" style="left:67.1px;top:104.80000000000001px;width:1.3px;height:31.19999999999999px;background:#c6d6e8"></div>
<div class="a" style="left:67.1px;top:165.3px;width:1.3px;height:30.69999999999999px;background:#c6d6e8"></div>
<div class="a" style="left:67.1px;top:226px;width:1.3px;height:63.19999999999999px;background:#c6d6e8"></div>
<div class="a" style="left:67.1px;top:318.4px;width:1.3px;height:28.600000000000023px;background:#c6d6e8"></div>
<div class="a" style="left:67.1px;top:27.49999999999999px;width:1.3px;height:1.5px;background:#c6d6e8"></div>
<div class="a" style="left:67.1px;top:87.89999999999999px;width:1.3px;height:1.5px;background:#c6d6e8"></div>
<div class="a" style="left:67.1px;top:148.3px;width:1.3px;height:1.5px;background:#c6d6e8"></div>
<div class="a" style="left:67.1px;top:209.3px;width:1.3px;height:1.5px;background:#c6d6e8"></div>
<div class="a" style="left:67.1px;top:305.3px;width:1.3px;height:1.5px;background:#c6d6e8"></div>
<div class="a" style="left:101px;top:176px;width:18px;height:22px;background:radial-gradient(closest-side,rgba(250,220,0,0.6),rgba(250,230,0,0))"></div>
<div class="a" style="left:107.6px;top:166px;width:8.2px;height:40px;background:linear-gradient(90deg,#f4dc30,#f0d000 40%,#e8d000);border-radius:1px"></div>
<div class="a" style="left:114.3px;top:164px;width:0.8px;height:40px;background:linear-gradient(#60c040,rgba(120,200,60,0.3))"></div>
<svg class="a" style="left:107px;top:202px;" width="8" height="8" viewBox="0 0 8 8"><circle cx="4" cy="4" r="3" fill="#f4e070" stroke="#3a8ad8" stroke-width="1.5"/><circle cx="4" cy="4" r="1.3" fill="none" stroke="#335" stroke-width="0.6"/></svg>
<div class="a" style="left:0px;top:0px;width:15px;height:14px;background:#e8e8e8"></div>
<svg class="a" style="left:2px;top:1px;" width="12" height="7" viewBox="0 0 12 7"><path d="M2 1 H11" stroke="#444" stroke-width="1.2" stroke-dasharray="1.1 0.7"/><path d="M2.5 1 V6" stroke="#333" stroke-width="1"/><path d="M0.8 4.5 L2.5 6.5 L4.2 4.5" fill="#333"/></svg>
<div class="t" style="left:5px;top:8.77px;font-size:5.6px;color:#555;">12</div>
<svg class="a" style="left:0px;top:0px;" width="328" height="14" viewBox="0 0 328 14"><rect x="16.8" y="11.6" width="1.2" height="2.4" fill="#555"/><rect x="34.9" y="11.6" width="1.2" height="2.4" fill="#555"/><rect x="53.0" y="11.6" width="1.2" height="2.4" fill="#555"/><rect x="71.1" y="11.6" width="1.2" height="2.4" fill="#555"/><rect x="89.2" y="7.5" width="1.2" height="6.5" fill="#555"/><rect x="107.3" y="11.6" width="1.2" height="2.4" fill="#555"/><rect x="125.4" y="11.6" width="1.2" height="2.4" fill="#555"/><rect x="143.5" y="11.6" width="1.2" height="2.4" fill="#555"/><rect x="161.6" y="11.6" width="1.2" height="2.4" fill="#555"/><rect x="179.7" y="8.8" width="1.2" height="5.2" fill="#555"/><rect x="197.8" y="11.6" width="1.2" height="2.4" fill="#555"/><rect x="215.9" y="11.6" width="1.2" height="2.4" fill="#555"/><rect x="234.0" y="11.6" width="1.2" height="2.4" fill="#555"/><rect x="252.1" y="11.6" width="1.2" height="2.4" fill="#555"/><rect x="270.2" y="7.5" width="1.2" height="6.5" fill="#555"/><rect x="288.3" y="11.6" width="1.2" height="2.4" fill="#555"/><rect x="306.4" y="11.6" width="1.2" height="2.4" fill="#555"/><rect x="324.5" y="11.6" width="1.2" height="2.4" fill="#555"/></svg>
<div class="a" style="left:262.6px;top:0px;width:1px;height:14px;background:#f0a060"></div>
<div class="t" style="left:84.5px;top:1.92px;font-size:6px;color:#333;">140</div>
<div class="t" style="left:265.5px;top:1.92px;font-size:6px;color:#333;">141</div>
<svg class="a" style="left:0px;top:0px;" width="15" height="347" viewBox="0 0 15 347"><rect x="12.4" y="15.2" width="2.4" height="1" fill="#4a4a4a"/><rect x="12.4" y="17.4" width="2.4" height="1" fill="#4a4a4a"/><rect x="12.4" y="19.7" width="2.4" height="1" fill="#4a4a4a"/><rect x="8.2" y="22.0" width="6.6" height="1" fill="#4a4a4a"/><rect x="12.4" y="24.3" width="2.4" height="1" fill="#4a4a4a"/><rect x="12.4" y="26.5" width="2.4" height="1" fill="#4a4a4a"/><rect x="12.4" y="28.8" width="2.4" height="1" fill="#4a4a4a"/><rect x="10.4" y="31.1" width="4.4" height="1" fill="#4a4a4a"/><rect x="12.4" y="33.4" width="2.4" height="1" fill="#4a4a4a"/><rect x="12.4" y="35.6" width="2.4" height="1" fill="#4a4a4a"/><rect x="12.4" y="37.9" width="2.4" height="1" fill="#4a4a4a"/><rect x="8.2" y="40.2" width="6.6" height="1" fill="#4a4a4a"/><rect x="12.4" y="42.5" width="2.4" height="1" fill="#4a4a4a"/><rect x="12.4" y="44.7" width="2.4" height="1" fill="#4a4a4a"/><rect x="12.4" y="47.0" width="2.4" height="1" fill="#4a4a4a"/><rect x="10.4" y="49.3" width="4.4" height="1" fill="#4a4a4a"/><rect x="12.4" y="51.6" width="2.4" height="1" fill="#4a4a4a"/><rect x="12.4" y="53.8" width="2.4" height="1" fill="#4a4a4a"/><rect x="12.4" y="56.1" width="2.4" height="1" fill="#4a4a4a"/><rect x="8.2" y="58.4" width="6.6" height="1" fill="#4a4a4a"/><rect x="12.4" y="60.7" width="2.4" height="1" fill="#4a4a4a"/><rect x="12.4" y="62.9" width="2.4" height="1" fill="#4a4a4a"/><rect x="12.4" y="65.2" width="2.4" height="1" fill="#4a4a4a"/><rect x="10.4" y="67.5" width="4.4" height="1" fill="#4a4a4a"/><rect x="12.4" y="69.8" width="2.4" height="1" fill="#4a4a4a"/><rect x="12.4" y="72.0" width="2.4" height="1" fill="#4a4a4a"/><rect x="12.4" y="74.3" width="2.4" height="1" fill="#4a4a4a"/><rect x="8.2" y="76.6" width="6.6" height="1" fill="#4a4a4a"/><rect x="12.4" y="78.9" width="2.4" height="1" fill="#4a4a4a"/><rect x="12.4" y="81.1" width="2.4" height="1" fill="#4a4a4a"/><rect x="12.4" y="83.4" width="2.4" height="1" fill="#4a4a4a"/><rect x="10.4" y="85.7" width="4.4" height="1" fill="#4a4a4a"/><rect x="12.4" y="88.0" width="2.4" height="1" fill="#4a4a4a"/><rect x="12.4" y="90.2" width="2.4" height="1" fill="#4a4a4a"/><rect x="12.4" y="92.5" width="2.4" height="1" fill="#4a4a4a"/><rect x="8.2" y="94.8" width="6.6" height="1" fill="#4a4a4a"/><rect x="12.4" y="97.1" width="2.4" height="1" fill="#4a4a4a"/><rect x="12.4" y="99.3" width="2.4" height="1" fill="#4a4a4a"/><rect x="12.4" y="101.6" width="2.4" height="1" fill="#4a4a4a"/><rect x="10.4" y="103.9" width="4.4" height="1" fill="#4a4a4a"/><rect x="12.4" y="106.2" width="2.4" height="1" fill="#4a4a4a"/><rect x="12.4" y="108.4" width="2.4" height="1" fill="#4a4a4a"/><rect x="12.4" y="110.7" width="2.4" height="1" fill="#4a4a4a"/><rect x="8.2" y="113.0" width="6.6" height="1" fill="#4a4a4a"/><rect x="12.4" y="115.3" width="2.4" height="1" fill="#4a4a4a"/><rect x="12.4" y="117.5" width="2.4" height="1" fill="#4a4a4a"/><rect x="12.4" y="119.8" width="2.4" height="1" fill="#4a4a4a"/><rect x="10.4" y="122.1" width="4.4" height="1" fill="#4a4a4a"/><rect x="12.4" y="124.4" width="2.4" height="1" fill="#4a4a4a"/><rect x="12.4" y="126.7" width="2.4" height="1" fill="#4a4a4a"/><rect x="12.4" y="128.9" width="2.4" height="1" fill="#4a4a4a"/><rect x="8.2" y="131.2" width="6.6" height="1" fill="#4a4a4a"/><rect x="12.4" y="133.5" width="2.4" height="1" fill="#4a4a4a"/><rect x="12.4" y="135.8" width="2.4" height="1" fill="#4a4a4a"/><rect x="12.4" y="138.0" width="2.4" height="1" fill="#4a4a4a"/><rect x="10.4" y="140.3" width="4.4" height="1" fill="#4a4a4a"/><rect x="12.4" y="142.6" width="2.4" height="1" fill="#4a4a4a"/><rect x="12.4" y="144.8" width="2.4" height="1" fill="#4a4a4a"/><rect x="12.4" y="147.1" width="2.4" height="1" fill="#4a4a4a"/><rect x="8.2" y="149.4" width="6.6" height="1" fill="#4a4a4a"/><rect x="12.4" y="151.7" width="2.4" height="1" fill="#4a4a4a"/><rect x="12.4" y="154.0" width="2.4" height="1" fill="#4a4a4a"/><rect x="12.4" y="156.2" width="2.4" height="1" fill="#4a4a4a"/><rect x="10.4" y="158.5" width="4.4" height="1" fill="#4a4a4a"/><rect x="12.4" y="160.8" width="2.4" height="1" fill="#4a4a4a"/><rect x="12.4" y="163.1" width="2.4" height="1" fill="#4a4a4a"/><rect x="12.4" y="165.3" width="2.4" height="1" fill="#4a4a4a"/><rect x="8.2" y="167.6" width="6.6" height="1" fill="#4a4a4a"/><rect x="12.4" y="169.9" width="2.4" height="1" fill="#4a4a4a"/><rect x="12.4" y="172.2" width="2.4" height="1" fill="#4a4a4a"/><rect x="12.4" y="174.4" width="2.4" height="1" fill="#4a4a4a"/><rect x="10.4" y="176.7" width="4.4" height="1" fill="#4a4a4a"/><rect x="12.4" y="179.0" width="2.4" height="1" fill="#4a4a4a"/><rect x="12.4" y="181.2" width="2.4" height="1" fill="#4a4a4a"/><rect x="12.4" y="183.5" width="2.4" height="1" fill="#4a4a4a"/><rect x="8.2" y="185.8" width="6.6" height="1" fill="#4a4a4a"/><rect x="12.4" y="188.1" width="2.4" height="1" fill="#4a4a4a"/><rect x="12.4" y="190.3" width="2.4" height="1" fill="#4a4a4a"/><rect x="12.4" y="192.6" width="2.4" height="1" fill="#4a4a4a"/><rect x="10.4" y="194.9" width="4.4" height="1" fill="#4a4a4a"/><rect x="12.4" y="197.2" width="2.4" height="1" fill="#4a4a4a"/><rect x="12.4" y="199.4" width="2.4" height="1" fill="#4a4a4a"/><rect x="12.4" y="201.7" width="2.4" height="1" fill="#4a4a4a"/><rect x="8.2" y="204.0" width="6.6" height="1" fill="#4a4a4a"/><rect x="12.4" y="206.3" width="2.4" height="1" fill="#4a4a4a"/><rect x="12.4" y="208.6" width="2.4" height="1" fill="#4a4a4a"/><rect x="12.4" y="210.8" width="2.4" height="1" fill="#4a4a4a"/><rect x="10.4" y="213.1" width="4.4" height="1" fill="#4a4a4a"/><rect x="12.4" y="215.4" width="2.4" height="1" fill="#4a4a4a"/><rect x="12.4" y="217.7" width="2.4" height="1" fill="#4a4a4a"/><rect x="12.4" y="219.9" width="2.4" height="1" fill="#4a4a4a"/><rect x="8.2" y="222.2" width="6.6" height="1" fill="#4a4a4a"/><rect x="12.4" y="224.5" width="2.4" height="1" fill="#4a4a4a"/><rect x="12.4" y="226.8" width="2.4" height="1" fill="#4a4a4a"/><rect x="12.4" y="229.0" width="2.4" height="1" fill="#4a4a4a"/><rect x="10.4" y="231.3" width="4.4" height="1" fill="#4a4a4a"/><rect x="12.4" y="233.6" width="2.4" height="1" fill="#4a4a4a"/><rect x="12.4" y="235.8" width="2.4" height="1" fill="#4a4a4a"/><rect x="12.4" y="238.1" width="2.4" height="1" fill="#4a4a4a"/><rect x="8.2" y="240.4" width="6.6" height="1" fill="#4a4a4a"/><rect x="12.4" y="242.7" width="2.4" height="1" fill="#4a4a4a"/><rect x="12.4" y="244.9" width="2.4" height="1" fill="#4a4a4a"/><rect x="12.4" y="247.2" width="2.4" height="1" fill="#4a4a4a"/><rect x="10.4" y="249.5" width="4.4" height="1" fill="#4a4a4a"/><rect x="12.4" y="251.8" width="2.4" height="1" fill="#4a4a4a"/><rect x="12.4" y="254.0" width="2.4" height="1" fill="#4a4a4a"/><rect x="12.4" y="256.3" width="2.4" height="1" fill="#4a4a4a"/><rect x="8.2" y="258.6" width="6.6" height="1" fill="#4a4a4a"/><rect x="12.4" y="260.9" width="2.4" height="1" fill="#4a4a4a"/><rect x="12.4" y="263.1" width="2.4" height="1" fill="#4a4a4a"/><rect x="12.4" y="265.4" width="2.4" height="1" fill="#4a4a4a"/><rect x="10.4" y="267.7" width="4.4" height="1" fill="#4a4a4a"/><rect x="12.4" y="270.0" width="2.4" height="1" fill="#4a4a4a"/><rect x="12.4" y="272.2" width="2.4" height="1" fill="#4a4a4a"/><rect x="12.4" y="274.5" width="2.4" height="1" fill="#4a4a4a"/><rect x="8.2" y="276.8" width="6.6" height="1" fill="#4a4a4a"/><rect x="12.4" y="279.1" width="2.4" height="1" fill="#4a4a4a"/><rect x="12.4" y="281.3" width="2.4" height="1" fill="#4a4a4a"/><rect x="12.4" y="283.6" width="2.4" height="1" fill="#4a4a4a"/><rect x="10.4" y="285.9" width="4.4" height="1" fill="#4a4a4a"/><rect x="12.4" y="288.2" width="2.4" height="1" fill="#4a4a4a"/><rect x="12.4" y="290.4" width="2.4" height="1" fill="#4a4a4a"/><rect x="12.4" y="292.7" width="2.4" height="1" fill="#4a4a4a"/><rect x="8.2" y="295.0" width="6.6" height="1" fill="#4a4a4a"/><rect x="12.4" y="297.3" width="2.4" height="1" fill="#4a4a4a"/><rect x="12.4" y="299.6" width="2.4" height="1" fill="#4a4a4a"/><rect x="12.4" y="301.8" width="2.4" height="1" fill="#4a4a4a"/><rect x="10.4" y="304.1" width="4.4" height="1" fill="#4a4a4a"/><rect x="12.4" y="306.4" width="2.4" height="1" fill="#4a4a4a"/><rect x="12.4" y="308.6" width="2.4" height="1" fill="#4a4a4a"/><rect x="12.4" y="310.9" width="2.4" height="1" fill="#4a4a4a"/><rect x="8.2" y="313.2" width="6.6" height="1" fill="#4a4a4a"/><rect x="12.4" y="315.5" width="2.4" height="1" fill="#4a4a4a"/><rect x="12.4" y="317.7" width="2.4" height="1" fill="#4a4a4a"/><rect x="12.4" y="320.0" width="2.4" height="1" fill="#4a4a4a"/><rect x="10.4" y="322.3" width="4.4" height="1" fill="#4a4a4a"/><rect x="12.4" y="324.6" width="2.4" height="1" fill="#4a4a4a"/><rect x="12.4" y="326.8" width="2.4" height="1" fill="#4a4a4a"/><rect x="12.4" y="329.1" width="2.4" height="1" fill="#4a4a4a"/><rect x="8.2" y="331.4" width="6.6" height="1" fill="#4a4a4a"/><rect x="12.4" y="333.7" width="2.4" height="1" fill="#4a4a4a"/><rect x="12.4" y="335.9" width="2.4" height="1" fill="#4a4a4a"/><rect x="12.4" y="338.2" width="2.4" height="1" fill="#4a4a4a"/><rect x="10.4" y="340.5" width="4.4" height="1" fill="#4a4a4a"/><rect x="12.4" y="342.8" width="2.4" height="1" fill="#4a4a4a"/><rect x="12.4" y="345.0" width="2.4" height="1" fill="#4a4a4a"/></svg>
<div class="t" style="left:1.2px;top:28.7px;font-size:6.6px;color:#4a3048;transform-origin:0 0;transform:rotate(-90deg)">21.5</div>
<div class="t" style="left:1.2px;top:46.9px;font-size:6.6px;color:#4a3048;transform-origin:0 0;transform:rotate(-90deg)">21.4</div>
<div class="t" style="left:1.2px;top:65.1px;font-size:6.6px;color:#4a3048;transform-origin:0 0;transform:rotate(-90deg)">21.3</div>
<div class="t" style="left:1.2px;top:83.3px;font-size:6.6px;color:#4a3048;transform-origin:0 0;transform:rotate(-90deg)">21.2</div>
<div class="t" style="left:1.2px;top:101.5px;font-size:6.6px;color:#4a3048;transform-origin:0 0;transform:rotate(-90deg)">21.1</div>
<div class="t" style="left:1.2px;top:119.7px;font-size:6.6px;color:#4a3048;transform-origin:0 0;transform:rotate(-90deg)">21.0</div>
<div class="t" style="left:1.2px;top:137.9px;font-size:6.6px;color:#4a3048;transform-origin:0 0;transform:rotate(-90deg)">20.9</div>
<div class="t" style="left:1.2px;top:156.1px;font-size:6.6px;color:#4a3048;transform-origin:0 0;transform:rotate(-90deg)">20.8</div>
<div class="t" style="left:1.2px;top:174.3px;font-size:6.6px;color:#4a3048;transform-origin:0 0;transform:rotate(-90deg)">20.7</div>
<div class="t" style="left:1.2px;top:192.5px;font-size:6.6px;color:#4a3048;transform-origin:0 0;transform:rotate(-90deg)">20.6</div>
<div class="t" style="left:1.2px;top:210.7px;font-size:6.6px;color:#4a3048;transform-origin:0 0;transform:rotate(-90deg)">20.5</div>
<div class="t" style="left:1.2px;top:228.9px;font-size:6.6px;color:#4a3048;transform-origin:0 0;transform:rotate(-90deg)">20.4</div>
<div class="t" style="left:1.2px;top:247.1px;font-size:6.6px;color:#4a3048;transform-origin:0 0;transform:rotate(-90deg)">20.3</div>
<div class="t" style="left:1.2px;top:265.3px;font-size:6.6px;color:#4a3048;transform-origin:0 0;transform:rotate(-90deg)">20.2</div>
<div class="t" style="left:1.2px;top:283.5px;font-size:6.6px;color:#4a3048;transform-origin:0 0;transform:rotate(-90deg)">20.1</div>
<div class="t" style="left:1.2px;top:301.7px;font-size:6.6px;color:#4a3048;transform-origin:0 0;transform:rotate(-90deg)">20.0</div>
<div class="t" style="left:1.2px;top:319.9px;font-size:6.6px;color:#4a3048;transform-origin:0 0;transform:rotate(-90deg)">19.9</div>
<div class="t" style="left:1.2px;top:338.1px;font-size:6.6px;color:#4a3048;transform-origin:0 0;transform:rotate(-90deg)">19.8</div>
</div>
<div class="a" style="left:19px;top:458px;width:328px;height:13px;background:#ebebeb"></div>
<div class="a" style="left:19px;top:458px;width:10px;height:13px;background:#dcdcdc;border-right:1px solid #f4f4f4"></div>
<svg class="a" style="left:21px;top:460px;" width="7" height="9" viewBox="0 0 7 9"><path d="M3.5 0.5 L6.5 4 H4.8 V8.5 H2.2 V4 H0.5Z" fill="#c8c8c8"/></svg>
<div class="a" style="left:30px;top:458px;width:10.5px;height:13px;background:#dcdcdc"></div>
<svg class="a" style="left:32px;top:460px;" width="7" height="9" viewBox="0 0 7 9"><path d="M3.5 8.5 L6.5 5 H4.8 V0.5 H2.2 V5 H0.5Z" fill="#2a7ae0"/></svg>
<div class="a" style="left:43px;top:458px;width:85.5px;height:13px;background:#dedede;border:1px solid #d0d0d0"></div>
<svg class="a" style="left:45px;top:460px;" width="10" height="9" viewBox="0 0 10 9"><rect x="0.5" y="0.5" width="9" height="8" fill="#f4f0e0" stroke="#888" stroke-width="0.6"/><path d="M1 6 L4 3 L6 5 L9 2" stroke="#c8a040" stroke-width="0.8" fill="none"/></svg>
<div class="t" style="left:57.5px;top:461.81px;font-size:6.85px;color:#333;">1 1st level (2.80 m)</div>
<svg class="a" style="left:120px;top:462px;" width="5" height="4" viewBox="0 0 5 4"><path d="M0.5 0.8 L2.5 2.8 L4.5 0.8" stroke="#444" stroke-width="0.9" fill="none"/></svg>
<svg class="a" style="left:136px;top:458px" width="48" height="13" viewBox="0 0 48 13"><path d="M0 0 H42 L48 13 H4 Z" fill="#f6f6f6" stroke="#d8d8d8" stroke-width="0.6"/></svg>
<svg class="a" style="left:139px;top:460.5px;" width="5" height="8" viewBox="0 0 5 8"><ellipse cx="2.5" cy="2.8" rx="2" ry="2.4" fill="#fff" stroke="#999" stroke-width="0.7"/><rect x="1.5" y="5.5" width="2" height="2" fill="#999"/></svg>
<div class="t" style="left:145px;top:461.36px;font-size:7.2px;color:#333;">Underlay</div>
<svg class="a" style="left:178px;top:458px" width="59" height="13" viewBox="0 0 59 13"><path d="M0 0 H53 L59 13 H4 Z" fill="#f6f6f6" stroke="#d8d8d8" stroke-width="0.6"/></svg>
<svg class="a" style="left:181px;top:460.5px;" width="5" height="8" viewBox="0 0 5 8"><ellipse cx="2.5" cy="2.8" rx="2.2" ry="2.6" fill="#f0b020"/><rect x="1.5" y="5.5" width="2" height="2" fill="#999"/></svg>
<div class="t" style="left:187px;top:461.36px;font-size:7.2px;color:#333;">Construction</div>
<svg class="a" style="left:234px;top:458px" width="55" height="13" viewBox="0 0 55 13"><path d="M0 0 H49 L55 13 H4 Z" fill="#ffffff" stroke="#d8d8d8" stroke-width="0.6"/></svg>
<svg class="a" style="left:237px;top:460.5px;" width="5" height="8" viewBox="0 0 5 8"><ellipse cx="2.5" cy="2.8" rx="2.2" ry="2.6" fill="#f0b020"/><rect x="1.5" y="5.5" width="2" height="2" fill="#999"/></svg>
<div class="t" style="left:243px;top:461.36px;font-size:7.2px;color:#222;font-weight:bold">Ventilation</div>
<svg class="a" style="left:284px;top:458px" width="50" height="13" viewBox="0 0 50 13"><path d="M0 0 H44 L50 13 H4 Z" fill="#f6f6f6" stroke="#d8d8d8" stroke-width="0.6"/></svg>
<svg class="a" style="left:287px;top:460.5px;" width="5" height="8" viewBox="0 0 5 8"><ellipse cx="2.5" cy="2.8" rx="2.2" ry="2.6" fill="#f0b020"/><rect x="1.5" y="5.5" width="2" height="2" fill="#999"/></svg>
<div class="t" style="left:293px;top:461.36px;font-size:7.2px;color:#333;">Printout</div>
<svg class="a" style="left:327px;top:462px;" width="5" height="4" viewBox="0 0 5 4"><path d="M0.5 0.8 L2.5 2.8 L4.5 0.8" stroke="#444" stroke-width="0.9" fill="none"/></svg>
<svg class="a" style="left:335px;top:459px;" width="11" height="11" viewBox="0 0 11 11"><rect x="0.5" y="0.5" width="9" height="7" fill="#cfe4f8" stroke="#5aa0e0" stroke-width="0.8"/><path d="M6 6 L8.5 10.5 L10.5 9" stroke="#d08040" stroke-width="1.6" fill="none"/></svg>
<div class="a" style="left:235.3px;top:454.7px;width:50px;height:16.5px;border:1.7px solid #ee3a4c;border-radius:4px"></div>
<div class="a" style="left:19px;top:471px;width:328px;height:14px;background:#0a78d2"></div>
<svg class="a" style="left:29px;top:474px;" width="7" height="7" viewBox="0 0 7 7"><path d="M1.5 0.5 H6.5 L5.5 6.5 H0.5Z" fill="#eaf2fc" stroke="#9cc" stroke-width="0.4"/></svg>
<div class="a" style="left:45px;top:476px;width:7px;height:2.5px;background:#dfe8f8"></div>
<svg class="a" style="left:62px;top:473px;" width="6" height="9" viewBox="0 0 6 9"><path d="M1.5 1 V8.5" stroke="#c8b890" stroke-width="1.3"/><path d="M1.5 1 L5 3 L1.5 5" fill="#c8b890"/></svg>
<svg class="a" style="left:84px;top:473px;" width="11" height="9" viewBox="0 0 11 9"><path d="M5.5 0.5 L10.5 8.5 H0.5Z" fill="#f8d020" stroke="#c89a10" stroke-width="0.5"/><path d="M5.5 3 V6" stroke="#333" stroke-width="1"/><circle cx="5.5" cy="7.3" r="0.5" fill="#333"/></svg>
<div class="t" style="left:106px;top:475.44px;font-size:6.6px;color:#fff;">140.955; 20.615</div>
<div class="t" style="left:197px;top:474.8px;font-size:6.6px;color:#fff">ORTO <span style="color:#9ac0e8">|</span> <span style="color:#5a9ad8">LOCK</span> <span style="color:#9ac0e8">|</span> <span style="color:#5a9ad8">GRID</span> <span style="color:#9ac0e8">|</span> AUTO <span style="color:#9ac0e8">|</span> <span style="color:#5a9ad8">REP</span> <span style="color:#9ac0e8">|</span> MIRO</div>
<svg class="a" style="left:334px;top:475px;" width="6" height="4" viewBox="0 0 6 4"><path d="M0.5 0.8 L3 3.2 L5.5 0.8" stroke="#fff" stroke-width="0.9" fill="none"/></svg>
<div class="a" style="left:351px;top:96.5px;width:58px;height:14px;background:#d5d7dc"></div>
<div class="a" style="left:351px;top:110px;width:328px;height:1px;background:#d5d7dc"></div>
<svg class="a" style="left:354px;top:99px;" width="9" height="10" viewBox="0 0 9 10"><path d="M1 9 L7 1" stroke="#556" stroke-width="0.9"/><path d="M4 9 L8.5 1.5" stroke="#e0a020" stroke-width="1.2"/><path d="M1 6 L3 4" stroke="#889" stroke-width="0.7"/></svg>
<div class="t" style="left:366.5px;top:99.96px;font-size:7.2px;color:#555;">3D view</div>
<svg class="a" style="left:397px;top:100px;" width="6" height="6" viewBox="0 0 6 6"><path d="M0.5 0.5 L5.5 5.5 M5.5 0.5 L0.5 5.5" stroke="#555" stroke-width="0.9"/></svg>
<svg class="a" style="left:672px;top:101px;" width="6" height="4" viewBox="0 0 6 4"><path d="M0.5 0.8 L3 3.2 L5.5 0.8" stroke="#666" stroke-width="0.8" fill="none"/></svg>
<div class="a" style="left:351px;top:111px;width:328px;height:347px;background:linear-gradient(#5585dc 0%,#7a98e2 26%,#b0b8f0 55%,#c4c6f6 72%,#c9c9f8 100%);overflow:hidden">
<div class="a" style="left:0px;top:0px;width:70.5px;height:347px;background:linear-gradient(#4f6ade 0%,#6a7ae6 26%,#8c92ee 55%,#9e9ef2 80%,#a2a2f2 100%)"></div>
<svg class="a" style="left:0px;top:0px;" width="328" height="347" viewBox="0 0 328 347"><path d="M50 0 L70.5 12.7 L0 83" stroke="#3a58f0" stroke-width="1.2" fill="none"/><path d="M70.5 12.7 V347" stroke="#4a64f0" stroke-width="1.1"/><path d="M86.5 0 V347" stroke="#6276f0" stroke-width="0.9"/><path d="M329 92 L75 347" stroke="#b46878" stroke-width="1.1" fill="none"/></svg>
<svg class="a" style="left:260px;top:10px;" width="68" height="50" viewBox="0 0 68 50"><g transform="translate(-260 -10)"><ellipse cx="292.8" cy="46" rx="22" ry="9" fill="none" stroke="#6e8ed6" stroke-width="4.5" opacity="0.85"/><path d="M269 40.5 H274 M313 48 L320 48.5 M281 54 L278.5 59" stroke="#3a4a70" stroke-width="0.7"/><path d="M276.8 25.9 L286.9 21.2 L306.8 22.4 L305.9 44.3 L300.5 52.6 L278 47.8 Z" fill="#5a72aa" opacity="0.95"/><path d="M276.8 25.9 L301.7 27.7 L306.8 22.4 M301.7 27.7 L300.5 52.6" stroke="#90a4d0" stroke-width="0.6" fill="none"/><path d="M276.8 25.9 L286.9 21.2 L306.8 22.4 L305.9 44.3 L300.5 52.6 L278 47.8 Z" fill="none" stroke="#4a5a88" stroke-width="0.5"/><path d="M286.9 21.2 V43 L278 47.8 M286.9 43 L305.9 44.3" stroke="#6a80b8" stroke-width="0.4" fill="none"/><text x="281" y="41.5" font-size="5.2" fill="#e4ecff" font-family="Liberation Sans" transform="rotate(4 288 40)">FRONT</text><path d="M303 37 L304.5 33" stroke="#dde" stroke-width="0.6"/><text x="287" y="25.5" font-size="2.5" fill="#c8d4f0" font-family="Liberation Sans">TOP</text></g></svg>
<svg class="a" style="left:96px;top:140px;" width="40" height="72" viewBox="0 0 40 72"><ellipse cx="22" cy="35.5" rx="13.5" ry="32" transform="rotate(8 22 35.5)" fill="#b0d060" opacity="0.75"/><ellipse cx="18.5" cy="36" rx="11" ry="31" transform="rotate(8 18.5 36)" fill="#e4e028" stroke="#f4d000" stroke-width="1.2"/><path d="M11 20 Q8 40 13 62" stroke="#f4f080" stroke-width="1" fill="none" transform="rotate(8 18.5 36)"/><ellipse cx="23" cy="35" rx="9.5" ry="30" transform="rotate(8 23 35)" fill="#c6cc3a" stroke="#f2d000" stroke-width="1.3"/><circle cx="20.2" cy="8.2" r="2.8" fill="none" stroke="#3a8ad0" stroke-width="1.6"/><circle cx="20.2" cy="8.2" r="1.2" fill="none" stroke="#203050" stroke-width="0.6"/></svg>
<svg class="a" style="left:20px;top:288px;" width="40" height="36" viewBox="0 0 40 36"><g transform="translate(-20 -288)"><path d="M27.8 318.7 V304" stroke="#000" stroke-width="1.8"/><path d="M28 296.5 L25.2 306.5 H30.8Z" fill="#000"/><path d="M27.8 318.7 L41 320" stroke="#000" stroke-width="1.8"/><path d="M49.5 321.3 L39.5 317.8 L39.5 323.3Z" fill="#000"/><path d="M27.8 318.7 L33.5 313.5" stroke="#000" stroke-width="1.4"/><path d="M35.3 311.8 L31 313 L33.5 315.8Z" fill="#000"/><circle cx="27.8" cy="318.7" r="2.3" fill="#000"/><text x="30" y="297.5" font-size="6" fill="#333" font-family="Liberation Sans">Z</text><text x="37" y="310.5" font-size="6" fill="#555" font-family="Liberation Sans">Y</text><text x="50" y="321" font-size="6" fill="#555" font-family="Liberation Sans">X</text></g></svg>
</div>
<div class="a" style="left:351px;top:458px;width:328px;height:13px;background:#ebebeb"></div>
<div class="a" style="left:351px;top:458px;width:10px;height:13px;background:#dcdcdc"></div>
<svg class="a" style="left:353px;top:460px;" width="7" height="9" viewBox="0 0 7 9"><path d="M3.5 0.5 L6.5 4 H4.8 V8.5 H2.2 V4 H0.5Z" fill="#2a7ae0"/></svg>
<div class="a" style="left:362px;top:458px;width:10px;height:13px;background:#dcdcdc"></div>
<svg class="a" style="left:364px;top:460px;" width="7" height="9" viewBox="0 0 7 9"><path d="M3.5 8.5 L6.5 5 H4.8 V0.5 H2.2 V5 H0.5Z" fill="#2a7ae0"/></svg>
<div class="a" style="left:374px;top:458px;width:10px;height:13px;background:#dcdcdc"></div>
<svg class="a" style="left:375px;top:460px;" width="8" height="8" viewBox="0 0 8 8"><path d="M0.5 1 H7.5 L5 4.5 V7.5 L3 6.5 V4.5Z" fill="#60b8e8"/><circle cx="6" cy="5" r="2" fill="#f0d020"/></svg>
<div class="a" style="left:385.5px;top:458px;width:87px;height:13px;background:#dedede;border:1px solid #d0d0d0"></div>
<svg class="a" style="left:395px;top:460px;" width="11" height="9" viewBox="0 0 11 9"><rect x="0.5" y="3" width="5" height="6" fill="#5a6a9a"/><path d="M8 0.5 V9 M6 0.8 H10 M6 8.5 H10" stroke="#d0a020" stroke-width="1.2"/></svg>
<div class="t" style="left:408px;top:461.36px;font-size:7.2px;color:#333;">Visible storeys</div>
<svg class="a" style="left:465.5px;top:462px;" width="5" height="4" viewBox="0 0 5 4"><path d="M0.5 0.8 L2.5 2.8 L4.5 0.8" stroke="#444" stroke-width="1" fill="none"/></svg>
<svg class="a" style="left:480px;top:458px" width="49" height="13" viewBox="0 0 49 13"><path d="M0 0 H43 L49 13 H4 Z" fill="#f6f6f6" stroke="#d8d8d8" stroke-width="0.6"/></svg>
<svg class="a" style="left:483px;top:460.5px;" width="5" height="8" viewBox="0 0 5 8"><ellipse cx="2.5" cy="2.8" rx="2.2" ry="2.6" fill="#f0b020"/><rect x="1.5" y="5.5" width="2" height="2" fill="#999"/></svg>
<div class="t" style="left:489px;top:461.36px;font-size:7.2px;color:#333;">Underlay</div>
<svg class="a" style="left:521px;top:458px" width="61" height="13" viewBox="0 0 61 13"><path d="M0 0 H55 L61 13 H4 Z" fill="#f6f6f6" stroke="#d8d8d8" stroke-width="0.6"/></svg>
<svg class="a" style="left:524px;top:460.5px;" width="5" height="8" viewBox="0 0 5 8"><ellipse cx="2.5" cy="2.8" rx="2.2" ry="2.6" fill="#f0b020"/><rect x="1.5" y="5.5" width="2" height="2" fill="#999"/></svg>
<div class="t" style="left:530px;top:461.36px;font-size:7.2px;color:#333;">Construction</div>
<svg class="a" style="left:578px;top:458px" width="56" height="13" viewBox="0 0 56 13"><path d="M0 0 H50 L56 13 H4 Z" fill="#ffffff" stroke="#d8d8d8" stroke-width="0.6"/></svg>
<svg class="a" style="left:581px;top:460.5px;" width="5" height="8" viewBox="0 0 5 8"><ellipse cx="2.5" cy="2.8" rx="2.2" ry="2.6" fill="#f0b020"/><rect x="1.5" y="5.5" width="2" height="2" fill="#999"/></svg>
<div class="t" style="left:587px;top:461.36px;font-size:7.2px;color:#222;font-weight:bold">Ventilation</div>
<svg class="a" style="left:629px;top:458px" width="48" height="13" viewBox="0 0 48 13"><path d="M0 0 H42 L48 13 H4 Z" fill="#f6f6f6" stroke="#d8d8d8" stroke-width="0.6"/></svg>
<svg class="a" style="left:632px;top:460.5px;" width="5" height="8" viewBox="0 0 5 8"><ellipse cx="2.5" cy="2.8" rx="2.2" ry="2.6" fill="#f0b020"/><rect x="1.5" y="5.5" width="2" height="2" fill="#999"/></svg>
<div class="t" style="left:638px;top:461.36px;font-size:7.2px;color:#333;">Printout</div>
<svg class="a" style="left:670px;top:462px;" width="5" height="4" viewBox="0 0 5 4"><path d="M0.5 0.8 L2.5 2.8 L4.5 0.8" stroke="#444" stroke-width="0.9" fill="none"/></svg>
<div class="a" style="left:351px;top:471px;width:328px;height:14px;background:#ececec;border-left:1px solid #dcdcdc;border-bottom:1px solid #dcdcdc"></div>
<div class="a" style="left:361.5px;top:474px;width:7px;height:7px;background:#d8d8d8;border-radius:3px;opacity:0.45"></div>
<div class="a" style="left:377px;top:474px;width:7px;height:7px;background:#d8d8d8;border-radius:3px;opacity:0.45"></div>
<div class="a" style="left:393px;top:474px;width:7px;height:7px;background:#f8f8f8;border-radius:3px;opacity:0.45"></div>
<div class="a" style="left:409.5px;top:474px;width:7px;height:7px;background:#d4d4d4;border-radius:3px;opacity:0.45"></div>
<div class="a" style="left:425px;top:474px;width:7px;height:7px;background:#dcdcdc;border-radius:3px;opacity:0.45"></div>
<div class="a" style="left:440.5px;top:474px;width:7px;height:7px;background:#c8c8c8;border-radius:3px;opacity:0.45"></div>
<div class="a" style="left:457px;top:474px;width:7px;height:7px;background:#90b0d8;border-radius:3px;opacity:0.45"></div>
<div class="a" style="left:473px;top:474px;width:7px;height:7px;background:#b89090;border-radius:3px;opacity:0.45"></div>
<div class="a" style="left:488.5px;top:474px;width:7px;height:7px;background:#98a4d0;border-radius:3px;opacity:0.45"></div>
<div class="a" style="left:504px;top:474px;width:7px;height:7px;background:#a8a8a8;border-radius:3px;opacity:0.45"></div>
<svg class="a" style="left:529px;top:473px;" width="11" height="9" viewBox="0 0 11 9"><path d="M5.5 0.5 L10.5 8.5 H0.5Z" fill="#f8d020" stroke="#c89a10" stroke-width="0.5"/><path d="M5.5 3 V6" stroke="#333" stroke-width="1"/><circle cx="5.5" cy="7.3" r="0.5" fill="#333"/></svg>
<div class="t" style="left:550px;top:475.44px;font-size:6.6px;color:#f8f8f8;">7.048; -3.981; 5.604</div>
<div class="t" style="left:634px;top:475.44px;font-size:6.6px;color:#f8f8f8;">ORTO | LOCK</div>
<svg class="a" style="left:20px;top:490.5px;" width="8" height="10" viewBox="0 0 8 10"><rect x="0.5" y="0.5" width="6.5" height="9" fill="#f4f4f4" stroke="#777" stroke-width="0.7"/><circle cx="5.5" cy="7.5" r="2.3" fill="#e02020"/></svg>
<div class="t" style="left:30.5px;top:492.09px;font-size:7.0px;color:#444;">Diagnostics</div>
<svg class="a" style="left:67.5px;top:492px;" width="5" height="7" viewBox="0 0 5 7"><rect x="1" y="0.5" width="3" height="4" fill="none" stroke="#555" stroke-width="0.7"/><path d="M2.5 4.5 V6.5" stroke="#555" stroke-width="0.7"/></svg>
<svg class="a" style="left:73.5px;top:492.5px;" width="6" height="6" viewBox="0 0 6 6"><path d="M0.5 0.5 L5.5 5.5 M5.5 0.5 L0.5 5.5" stroke="#555" stroke-width="0.9"/></svg>
<div class="a" style="left:19px;top:502px;width:61px;height:2px;background:#c8c8c8"></div>
<div class="a" style="left:0px;top:504px;width:900px;height:2px;background:#1e1e1e"></div>
<div class="a" style="left:685px;top:111px;width:211px;height:375px;background:#f0f0f0;border-left:1px solid #d9d9d9;border-right:1px solid #d9d9d9"></div>
<div class="a" style="left:685px;top:97px;width:210px;height:14px;background:#0078d4"></div>
<svg class="a" style="left:687px;top:99px;" width="11" height="11" viewBox="0 0 11 11"><rect x="0.5" y="0.5" width="6" height="9.5" fill="#f4f4f4" stroke="#c06060" stroke-width="0.6"/><path d="M2 3 H5 M2 5 H5 M2 7 H5" stroke="#d04040" stroke-width="0.6"/><path d="M3 10 L10 2" stroke="#f0b030" stroke-width="1.6"/></svg>
<div class="a" style="left:700px;top:102.5px;width:3.2px;height:3.2px;background:#fff;border-radius:50%"></div>
<div class="t" style="left:704.8px;top:100.55px;font-size:7.3px;color:#fff;">Data table</div>
<svg class="a" style="left:743px;top:102px;" width="117" height="5" viewBox="0 0 117 5"><pattern id="dots" width="2" height="2" patternUnits="userSpaceOnUse"><rect width="1" height="1" fill="#2c8ad8"/><rect x="1" y="1" width="1" height="1" fill="#2c8ad8"/></pattern><rect width="117" height="5" fill="url(#dots)"/></svg>
<svg class="a" style="left:865px;top:102px;" width="6" height="4" viewBox="0 0 6 4"><path d="M0.5 0.8 L3 3.2 L5.5 0.8" stroke="#fff" stroke-width="0.9" fill="none"/></svg>
<svg class="a" style="left:876px;top:100px;" width="5" height="8" viewBox="0 0 5 8"><rect x="0.8" y="0.5" width="3.4" height="4.5" fill="#c8dcf0" stroke="#e8f0f8" stroke-width="0.5"/><path d="M2.5 5 V7.5" stroke="#fff" stroke-width="0.7"/></svg>
<svg class="a" style="left:885px;top:100px;" width="7" height="7" viewBox="0 0 7 7"><path d="M0.5 0.5 L6.5 6.5 M6.5 0.5 L0.5 6.5" stroke="#fff" stroke-width="1"/></svg>
<div class="a" style="left:686px;top:111px;width:209px;height:18.5px;background:#f0f0f0;border-bottom:1px solid #dcdcdc"></div>
<svg class="a" style="left:688px;top:118px;" width="6" height="4" viewBox="0 0 6 4"><path d="M0.7 0.8 L3 3 L5.3 0.8" stroke="#333" stroke-width="1.3" fill="none"/></svg>
<div class="t" style="left:695px;width:200px;text-align:center;top:114.56px;font-size:7.2px;color:#333;">1* Air intake</div>
<div class="a" style="left:885px;top:130px;width:10px;height:309px;background:#f8f8f8"></div>
<svg class="a" style="left:886px;top:132px;" width="8" height="5" viewBox="0 0 8 5"><path d="M0.8 4.2 L4 1 L7.2 4.2" stroke="#bbb" stroke-width="0.9" fill="none"/></svg>
<svg class="a" style="left:886px;top:432px;" width="8" height="5" viewBox="0 0 8 5"><path d="M0.8 0.8 L4 4 L7.2 0.8" stroke="#bbb" stroke-width="0.9" fill="none"/></svg>
<svg class="a" style="left:686.5px;top:134.6px;" width="6" height="4" viewBox="0 0 6 4"><path d="M0.8 0.8 L3 3 L5.2 0.8" stroke="#444" stroke-width="1.3" fill="none"/></svg>
<div class="t" style="left:694.3px;top:132.88px;font-size:8.6px;color:#8a8a8a;">Component identification</div>
<div class="a" style="left:693px;top:142.97px;width:91.2px;height:12.37px;background:#fff"></div>
<div class="a" style="left:785px;top:142.97px;width:100px;height:12.37px;background:#fff"></div>
<div class="t" style="left:695.3px;top:146.43px;font-size:7.2px;color:#2a2a2a;">Symbol</div>
<svg class="a" style="left:870px;top:147.97px;" width="5" height="4" viewBox="0 0 5 4"><path d="M0.5 0.8 L2.5 2.8 L4.5 0.8" stroke="#333" stroke-width="0.9" fill="none"/></svg>
<div class="a" style="left:693px;top:156.34px;width:91.2px;height:12.37px;background:#fff"></div>
<div class="a" style="left:785px;top:156.34px;width:100px;height:12.37px;background:#e4eef9"></div>
<div class="t" style="left:695.3px;top:159.80px;font-size:7.2px;color:#2a2a2a;">In room</div>
<div class="t" style="left:786.5px;top:159.80px;font-size:7.2px;color:#404a90;">None</div>
<svg class="a" style="left:870px;top:161.34px;" width="5" height="4" viewBox="0 0 5 4"><path d="M0.5 0.8 L2.5 2.8 L4.5 0.8" stroke="#333" stroke-width="0.9" fill="none"/></svg>
<svg class="a" style="left:877.5px;top:158.84px;" width="8" height="8" viewBox="0 0 8 8"><rect x="0.6" y="0.8" width="6.8" height="4.6" fill="#a8dcf8" stroke="#2a90d8" stroke-width="0.8"/><rect x="4" y="3.6" width="3.6" height="3" fill="#3a88c8"/><path d="M1 7.3 H7.5" stroke="#2a90d8" stroke-width="0.8"/></svg>
<svg class="a" style="left:686.5px;top:174.70999999999998px;" width="6" height="4" viewBox="0 0 6 4"><path d="M0.8 0.8 L3 3 L5.2 0.8" stroke="#444" stroke-width="1.3" fill="none"/></svg>
<div class="t" style="left:694.3px;top:172.99px;font-size:8.6px;color:#8a8a8a;">Position</div>
<div class="a" style="left:693px;top:183.07999999999998px;width:91.2px;height:12.37px;background:#fff"></div>
<div class="a" style="left:785px;top:183.07999999999998px;width:100px;height:12.37px;background:#fff"></div>
<div class="t" style="left:695.3px;top:186.54px;font-size:7.2px;color:#2a2a2a;width:89px;overflow:hidden">Floor to element axis distanc</div>
<div class="t" style="left:786.5px;top:186.54px;font-size:7.2px;color:#333;">3.20</div>
<div class="t" style="left:870.5px;top:186.54px;font-size:7.2px;color:#555;">m</div>
<div class="a" style="left:693px;top:196.45px;width:91.2px;height:12.37px;background:#fff"></div>
<div class="a" style="left:785px;top:196.45px;width:100px;height:12.37px;background:#dce2ea"></div>
<div class="t" style="left:695.3px;top:199.91px;font-size:7.2px;color:#8a8a8a;">Elevation</div>
<div class="t" style="left:786.5px;top:199.91px;font-size:7.2px;color:#777;">6.01</div>
<div class="t" style="left:870.5px;top:199.91px;font-size:7.2px;color:#777;">m</div>
<svg class="a" style="left:686.5px;top:214.82px;" width="6" height="4" viewBox="0 0 6 4"><path d="M0.8 0.8 L3 3 L5.2 0.8" stroke="#444" stroke-width="1.3" fill="none"/></svg>
<div class="t" style="left:694.3px;top:213.10px;font-size:8.6px;color:#8a8a8a;">Technical data</div>
<div class="a" style="left:693px;top:223.19px;width:91.2px;height:12.37px;background:#fff"></div>
<div class="a" style="left:785px;top:223.19px;width:100px;height:12.37px;background:#e4eef9"></div>
<div class="t" style="left:695.3px;top:226.65px;font-size:7.2px;color:#2a2a2a;">Type</div>
<div class="t" style="left:786.5px;top:226.65px;font-size:7.2px;color:#404a90;">DN200 / Wall air intake</div>
<svg class="a" style="left:870px;top:228.19px;" width="5" height="4" viewBox="0 0 5 4"><path d="M0.5 0.8 L2.5 2.8 L4.5 0.8" stroke="#333" stroke-width="0.9" fill="none"/></svg>
<svg class="a" style="left:877.5px;top:225.69px;" width="8" height="8" viewBox="0 0 8 8"><rect x="0.6" y="0.8" width="6.8" height="4.6" fill="#a8dcf8" stroke="#2a90d8" stroke-width="0.8"/><rect x="4" y="3.6" width="3.6" height="3" fill="#3a88c8"/><path d="M1 7.3 H7.5" stroke="#2a90d8" stroke-width="0.8"/></svg>
<div class="a" style="left:693px;top:236.56px;width:91.2px;height:12.37px;background:#fff"></div>
<div class="a" style="left:785px;top:236.56px;width:100px;height:12.37px;background:#e4eef9"></div>
<div class="t" style="left:695.5px;top:239.80px;font-size:7.4px;color:#222;">v</div>
<div class="t" style="left:699.5px;top:243.08px;font-size:5.2px;color:#222;">max</div>
<div class="t" style="left:786.5px;top:240.02px;font-size:7.2px;color:#404a90;">3.50</div>
<svg class="a" style="left:877.5px;top:239.06px;" width="8" height="8" viewBox="0 0 8 8"><rect x="0.6" y="0.8" width="6.8" height="4.6" fill="#a8dcf8" stroke="#2a90d8" stroke-width="0.8"/><rect x="4" y="3.6" width="3.6" height="3" fill="#3a88c8"/><path d="M1 7.3 H7.5" stroke="#2a90d8" stroke-width="0.8"/></svg>
<div class="t" style="left:862.5px;top:240.02px;font-size:7.2px;color:#555;">m/s</div>
<div class="a" style="left:693px;top:249.93px;width:91.2px;height:12.37px;background:#fff"></div>
<div class="a" style="left:785px;top:249.93px;width:100px;height:12.37px;background:#fff"></div>
<div class="t" style="left:695.3px;top:253.39px;font-size:7.2px;color:#2a2a2a;">Component status</div>
<div class="t" style="left:786.5px;top:253.39px;font-size:7.2px;color:#333;">Under design</div>
<svg class="a" style="left:870px;top:254.93px;" width="5" height="4" viewBox="0 0 5 4"><path d="M0.5 0.8 L2.5 2.8 L4.5 0.8" stroke="#333" stroke-width="0.9" fill="none"/></svg>
<svg class="a" style="left:686.5px;top:268.29999999999995px;" width="6" height="4" viewBox="0 0 6 4"><path d="M0.8 0.8 L3 3 L5.2 0.8" stroke="#444" stroke-width="1.3" fill="none"/></svg>
<div class="t" style="left:694.3px;top:266.58px;font-size:8.6px;color:#8a8a8a;">2D/3D view style</div>
<div class="a" style="left:693px;top:276.66999999999996px;width:91.2px;height:12.37px;background:#fff"></div>
<div class="a" style="left:785px;top:276.66999999999996px;width:100px;height:12.37px;background:#e4eef9"></div>
<div class="t" style="left:695.3px;top:280.13px;font-size:7.2px;color:#2a2a2a;">Element style</div>
<div class="t" style="left:786.5px;top:280.13px;font-size:7.2px;color:#404a90;">Air intake</div>
<svg class="a" style="left:870px;top:281.66999999999996px;" width="5" height="4" viewBox="0 0 5 4"><path d="M0.5 0.8 L2.5 2.8 L4.5 0.8" stroke="#333" stroke-width="0.9" fill="none"/></svg>
<svg class="a" style="left:877.5px;top:279.16999999999996px;" width="8" height="8" viewBox="0 0 8 8"><rect x="0.6" y="0.8" width="6.8" height="4.6" fill="#a8dcf8" stroke="#2a90d8" stroke-width="0.8"/><rect x="4" y="3.6" width="3.6" height="3" fill="#3a88c8"/><path d="M1 7.3 H7.5" stroke="#2a90d8" stroke-width="0.8"/></svg>
<svg class="a" style="left:686.5px;top:295.03999999999996px;" width="6" height="4" viewBox="0 0 6 4"><path d="M0.8 0.8 L3 3 L5.2 0.8" stroke="#444" stroke-width="1.3" fill="none"/></svg>
<div class="t" style="left:694.3px;top:293.32px;font-size:8.6px;color:#8a8a8a;">Grille[1]</div>
<div class="a" style="left:693px;top:303.40999999999997px;width:91.2px;height:12.37px;background:#fff"></div>
<div class="a" style="left:785px;top:303.40999999999997px;width:100px;height:12.37px;background:#e4eef9"></div>
<div class="t" style="left:695.3px;top:306.87px;font-size:7.2px;color:#2a2a2a;">Type</div>
<div class="t" style="left:786.5px;top:306.87px;font-size:7.2px;color:#404a90;">DN200/250 / Round_grille</div>
<svg class="a" style="left:870px;top:308.40999999999997px;" width="5" height="4" viewBox="0 0 5 4"><path d="M0.5 0.8 L2.5 2.8 L4.5 0.8" stroke="#333" stroke-width="0.9" fill="none"/></svg>
<svg class="a" style="left:877.5px;top:305.90999999999997px;" width="8" height="8" viewBox="0 0 8 8"><rect x="0.6" y="0.8" width="6.8" height="4.6" fill="#a8dcf8" stroke="#2a90d8" stroke-width="0.8"/><rect x="4" y="3.6" width="3.6" height="3" fill="#3a88c8"/><path d="M1 7.3 H7.5" stroke="#2a90d8" stroke-width="0.8"/></svg>
<div class="a" style="left:693px;top:316.78px;width:91.2px;height:12.37px;background:#fff"></div>
<div class="a" style="left:785px;top:316.78px;width:100px;height:12.37px;background:#e4eef9"></div>
<div class="a" style="left:693px;top:316.78px;width:91.2px;height:12.37px;background:#cde6f7"></div>
<div class="t" style="left:695.3px;top:320.24px;font-size:7.2px;color:#2a2a2a;">Rotation angle</div>
<div class="a" style="left:785.5px;top:319.28px;width:9.5px;height:9px;background:#3388dd;opacity:0.55"></div>
<div class="t" style="left:786.5px;top:320.24px;font-size:7.2px;color:#404a90;">0.0</div>
<svg class="a" style="left:877.5px;top:319.28px;" width="8" height="8" viewBox="0 0 8 8"><rect x="0.6" y="0.8" width="6.8" height="4.6" fill="#a8dcf8" stroke="#2a90d8" stroke-width="0.8"/><rect x="4" y="3.6" width="3.6" height="3" fill="#3a88c8"/><path d="M1 7.3 H7.5" stroke="#2a90d8" stroke-width="0.8"/></svg>
<div class="t" style="left:872px;top:320.04px;font-size:7.2px;color:#555;">°</div>
<div class="a" style="left:686px;top:330px;width:199px;height:109px;background:#fff"></div>
<div class="a" style="left:685px;top:439px;width:211px;height:46.5px;background:#f8f8f8;border:1px solid #dedede"></div>
<div class="t" style="left:692px;top:447.80px;font-size:6.95px;color:#222;font-weight:bold">Rotation angle</div>
<div class="a" style="left:691.6px;top:317.3px;width:197px;height:13.6px;border:1.7px solid #ee3a4c;border-radius:4px"></div></body></html>
